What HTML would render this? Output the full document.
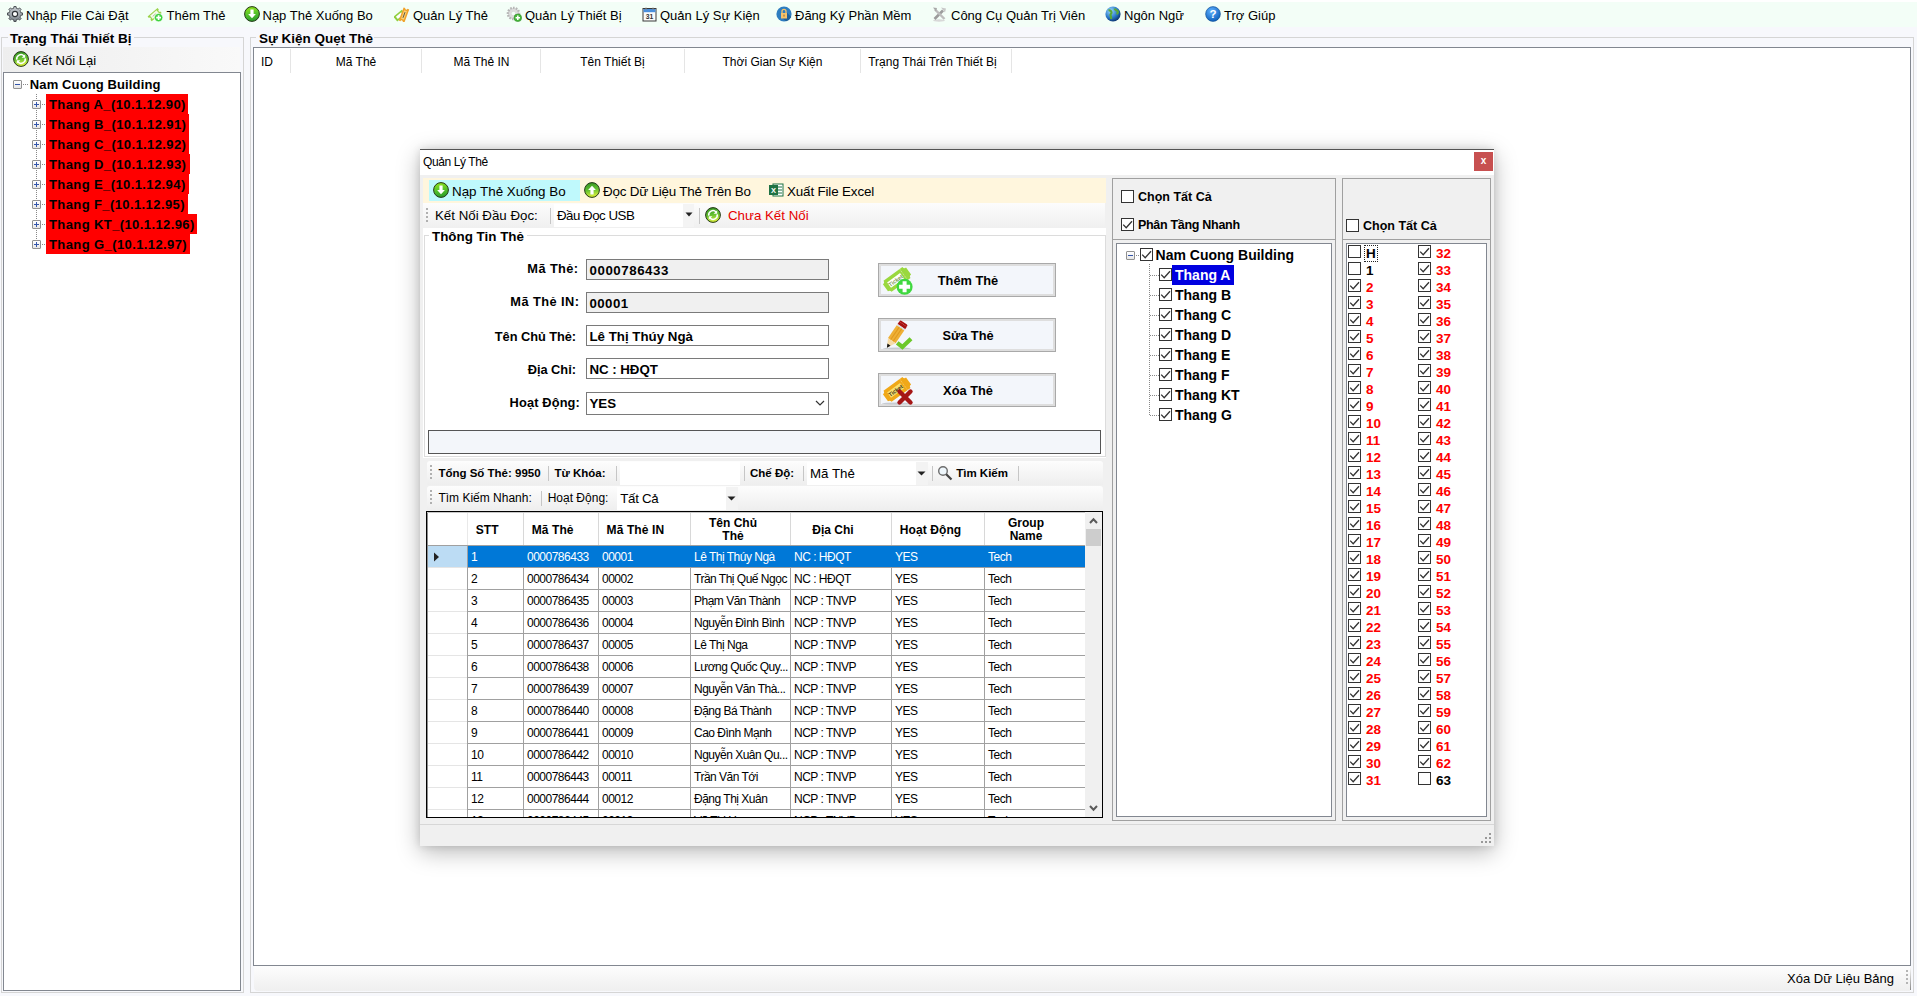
<!DOCTYPE html><html><head><meta charset="utf-8"><style>
html,body{margin:0;padding:0;width:1917px;height:996px;overflow:hidden;background:#f7f8fc;font-family:"Liberation Sans",sans-serif;}
.t{position:absolute;white-space:nowrap;line-height:1;}
.r{position:absolute;box-sizing:border-box;}
</style></head><body>
<div class="r" style="left:0px;top:0px;width:1917px;height:2px;background:#fff"></div>
<div class="r" style="left:0px;top:2px;width:1917px;height:25px;background:#f3fef7"></div>
<svg class="r" style="left:7px;top:6px" width="16" height="16" viewBox="0 0 16 16"><defs><linearGradient id="gr" x1="0" y1="0" x2="0" y2="1"><stop offset="0" stop-color="#c9ced3"/><stop offset="1" stop-color="#7d858c"/></linearGradient></defs><path d="M13.76 6.71 L15.53 6.94 L15.53 9.06 L13.76 9.29 L13.45 10.26 L12.98 11.16 L14.07 12.57 L12.57 14.07 L11.16 12.98 L10.26 13.45 L9.29 13.76 L9.06 15.53 L6.94 15.53 L6.71 13.76 L5.74 13.45 L4.84 12.98 L3.43 14.07 L1.93 12.57 L3.02 11.16 L2.55 10.26 L2.24 9.29 L0.47 9.06 L0.47 6.94 L2.24 6.71 L2.55 5.74 L3.02 4.84 L1.93 3.43 L3.43 1.93 L4.84 3.02 L5.74 2.55 L6.71 2.24 L6.94 0.47 L9.06 0.47 L9.29 2.24 L10.26 2.55 L11.16 3.02 L12.57 1.93 L14.07 3.43 L12.98 4.84 L13.45 5.74Z" fill="url(#gr)" stroke="#3e4348" stroke-width="0.9"/><circle cx="8" cy="8" r="2.6" fill="#fff" stroke="#2e3236" stroke-width="1.1"/></svg>
<div class="t" style="left:26px;top:8.8px;font-size:13px;font-weight:400;color:#000;">Nhập File Cài Đặt</div>
<svg class="r" style="left:147px;top:6px" width="16" height="16" viewBox="0 0 16 16"><g transform="rotate(-40 7.5 8.5)"><path d="M1 5.5h13v2a1.2 1.2 0 0 0 0 2.4v2H1v-2a1.2 1.2 0 0 0 0-2.4z" fill="#9ad24a"/><rect x="3.3" y="6.6" width="8.4" height="4.2" fill="#f4fae8"/><path d="M5 8.8h4" stroke="#9aa08a" stroke-width="0.7"/></g><circle cx="11.6" cy="11.6" r="4.2" fill="#3ed33e" stroke="#fff" stroke-width="0.6"/><path d="M11.6 9.2v4.8M9.2 11.6h4.8" stroke="#fff" stroke-width="1.7"/></svg>
<div class="t" style="left:166.5px;top:8.8px;font-size:13px;font-weight:400;color:#000;">Thêm Thẻ</div>
<svg class="r" style="left:244px;top:6px" width="16" height="16" viewBox="0 0 16 16"><defs><linearGradient id="g244_6" x1="0" y1="0" x2="0.2" y2="1"><stop offset="0" stop-color="#9ce81c"/><stop offset="0.5" stop-color="#5cc828"/><stop offset="1" stop-color="#2ea02a"/></linearGradient></defs><circle cx="8" cy="8" r="7.4" fill="url(#g244_6)" stroke="#243818" stroke-width="1"/><path d="M6.4 3.6h3.2v4.3h2.3L8 12.3 4.1 7.9h2.3z" fill="#fff"/></svg>
<div class="t" style="left:262.5px;top:8.8px;font-size:13px;font-weight:400;color:#000;">Nạp Thẻ Xuống Bo</div>
<svg class="r" style="left:394px;top:6px" width="16" height="16" viewBox="0 0 16 16"><g transform="rotate(-40 7 9)"><rect x="0" y="5.5" width="11" height="6" fill="#8fd03e"/><rect x="2" y="7" width="7" height="3" fill="#fff"/></g><g transform="rotate(-70 10 9)"><path d="M3 6h14v1.8a1.2 1.2 0 0 0 0 2.4V12H3v-1.8a1.2 1.2 0 0 0 0-2.4z" fill="#f0a22a"/><rect x="5.5" y="7.5" width="9" height="3" fill="#f8d27a"/><path d="M7 9h6" stroke="#333" stroke-width="0.7"/></g></svg>
<div class="t" style="left:413px;top:8.8px;font-size:13px;font-weight:400;color:#000;">Quản Lý Thẻ</div>
<svg class="r" style="left:506px;top:6px" width="16" height="16" viewBox="0 0 16 16"><circle cx="7.5" cy="7.5" r="5.6" fill="#d2d2d2" stroke="#b5b5b5" stroke-width="2.4" stroke-dasharray="1.6 1.2"/><circle cx="7.5" cy="7.5" r="4.4" fill="#dcdcdc"/><circle cx="7.5" cy="7.5" r="1.8" fill="#f3fef7"/><circle cx="11.8" cy="11.8" r="3.8" fill="#46b83a" stroke="#2d8a25" stroke-width="0.6"/><path d="M11.8 9.6v4.4M9.6 11.8h4.4" stroke="#fff" stroke-width="1.5"/></svg>
<div class="t" style="left:525px;top:8.8px;font-size:13px;font-weight:400;color:#000;">Quản Lý Thiết Bị</div>
<svg class="r" style="left:642px;top:6px" width="16" height="16" viewBox="0 0 16 16"><rect x="1" y="2.5" width="13" height="12.5" fill="#fbfbfb" stroke="#3a3a3a" stroke-width="1"/><rect x="1.5" y="3" width="12" height="3.2" fill="#4a8fdc"/><path d="M4 1.5v2.5M11 1.5v2.5" stroke="#888" stroke-width="1"/><text x="7.5" y="12.8" font-size="6.8" text-anchor="middle" font-family="Liberation Sans" font-weight="bold" fill="#333">31</text></svg>
<div class="t" style="left:660px;top:8.8px;font-size:13px;font-weight:400;color:#000;">Quản Lý Sự Kiện</div>
<svg class="r" style="left:776px;top:6px" width="16" height="16" viewBox="0 0 16 16"><circle cx="8" cy="8" r="7.6" fill="#2e7dc0"/><path d="M10.8 6.5L15.2 11A7.6 7.6 0 0 1 10 15.3L5 11z" fill="#1f5f98"/><rect x="5" y="7" width="6" height="5.5" fill="#f6c26a"/><path d="M6 7V5.3a2 2 0 0 1 4 0V7" stroke="#f6c26a" stroke-width="1.3" fill="none"/><rect x="7.5" y="8.6" width="1" height="2" fill="#8a6a3a"/></svg>
<div class="t" style="left:795px;top:8.8px;font-size:13px;font-weight:400;color:#000;">Đăng Ký Phần Mềm</div>
<svg class="r" style="left:932px;top:6px" width="16" height="16" viewBox="0 0 16 16"><ellipse cx="7" cy="14.5" rx="6" ry="1.2" fill="#d8d8d8"/><path d="M2.5 13L11 4.5" stroke="#9c9c9c" stroke-width="2.6"/><path d="M3 3.5l9.5 9.5" stroke="#bdbdbd" stroke-width="2.4"/><path d="M9 1.5l5 1-1 4z" fill="#c8c8c8"/><path d="M1 1.5l4 0.5-1 3.5z" fill="#a8a8a8"/></svg>
<div class="t" style="left:951px;top:8.8px;font-size:13px;font-weight:400;color:#000;">Công Cụ Quản Trị Viên</div>
<svg class="r" style="left:1105px;top:6px" width="16" height="16" viewBox="0 0 16 16"><defs><radialGradient id="gl" cx="35%" cy="30%" r="75%"><stop offset="0" stop-color="#9ad8ff"/><stop offset="0.6" stop-color="#2a78c8"/><stop offset="1" stop-color="#0a2f6a"/></radialGradient></defs><circle cx="8" cy="8" r="7.6" fill="url(#gl)"/><path d="M3.5 4.5c1.5-0.5 3 0.5 3 2s-1.5 1.5-1 3 1 2 0.5 3.5M9.5 2.5c0.5 1.5 2 1.5 3 2.5s0 2.5-1 3" stroke="#5aa83a" stroke-width="2.2" fill="none"/></svg>
<div class="t" style="left:1124px;top:8.8px;font-size:13px;font-weight:400;color:#000;">Ngôn Ngữ</div>
<svg class="r" style="left:1205px;top:6px" width="16" height="16" viewBox="0 0 16 16"><defs><radialGradient id="hl" cx="40%" cy="30%" r="75%"><stop offset="0" stop-color="#5fb0ff"/><stop offset="1" stop-color="#0b5cb8"/></radialGradient></defs><circle cx="8" cy="8" r="7.4" fill="url(#hl)" stroke="#0a4a90" stroke-width="0.6"/><text x="8" y="12.3" font-size="11.5" font-weight="bold" text-anchor="middle" font-family="Liberation Sans" fill="#fff">?</text></svg>
<div class="t" style="left:1224px;top:8.8px;font-size:13px;font-weight:400;color:#000;">Trợ Giúp</div>
<div class="r" style="left:1px;top:37px;width:243px;height:956px;border:1px solid #d5d5d5;"></div>
<div class="r" style="left:8px;top:30px;width:126px;height:14px;background:#f7f8fc"></div>
<div class="t" style="left:10px;top:32.0px;font-size:13.5px;font-weight:700;color:#000;">Trạng Thái Thiết Bị</div>
<div class="r" style="left:3px;top:47px;width:237px;height:25px;background:linear-gradient(to right,#eeeeee,#f9f9f9)"></div>
<svg class="r" style="left:13px;top:51px" width="16" height="16" viewBox="0 0 16 16"><defs><linearGradient id="g13_51" x1="0" y1="0" x2="0.2" y2="1"><stop offset="0" stop-color="#2f8f22"/><stop offset="0.55" stop-color="#62c030"/><stop offset="1" stop-color="#d6ee3a"/></linearGradient></defs><circle cx="8" cy="8" r="7.4" fill="url(#g13_51)" stroke="#243818" stroke-width="1"/><path d="M3.8 8.6A4.2 4.2 0 0 1 11 5" stroke="#fff" stroke-width="1.5" fill="none"/><path d="M12.2 3.2v3.6H8.6z" fill="#fff"/><path d="M12.2 7.4A4.2 4.2 0 0 1 5 11" stroke="#fff" stroke-width="1.5" fill="none"/><path d="M3.8 12.8V9.2h3.6z" fill="#fff"/></svg>
<div class="t" style="left:32.5px;top:53.8px;font-size:13px;font-weight:400;color:#000;">Kết Nối Lại</div>
<div class="r" style="left:3px;top:72px;width:238px;height:919px;border:1px solid #828790;background:#fff"></div>
<div class="r" style="left:13px;top:80px;width:9px;height:9px;border:1px solid #919191;background:linear-gradient(#fff,#e6e6e6);border-radius:1px"></div>
<div class="r" style="left:15px;top:84px;width:5px;height:1px;background:#3355aa"></div>
<div class="r" style="left:23px;top:84px;width:5px;height:1px;background-image:linear-gradient(to right,#888 50%,transparent 50%);background-size:2px 1px"></div>
<div class="t" style="left:29.8px;top:77.8px;font-size:13px;font-weight:700;color:#000;letter-spacing:0.12px">Nam Cuong Building</div>
<div class="r" style="left:36px;top:94px;width:1px;height:150px;background-image:linear-gradient(#888 50%,transparent 50%);background-size:1px 2px"></div>
<div class="r" style="left:46px;top:94px;width:142px;height:20px;background:#ff0000"></div>
<div class="r" style="left:32px;top:100px;width:9px;height:9px;border:1px solid #919191;background:linear-gradient(#fff,#e6e6e6);border-radius:1px"></div>
<div class="r" style="left:34px;top:104px;width:5px;height:1px;background:#3355aa"></div>
<div class="r" style="left:36px;top:102px;width:1px;height:5px;background:#3355aa"></div>
<div class="r" style="left:42px;top:104px;width:4px;height:1px;background-image:linear-gradient(to right,#888 50%,transparent 50%);background-size:2px 1px"></div>
<div class="t" style="left:49px;top:98.0px;font-size:13px;font-weight:700;color:#000;letter-spacing:0.4px">Thang A_(10.1.12.90)</div>
<div class="r" style="left:46px;top:114px;width:143px;height:20px;background:#ff0000"></div>
<div class="r" style="left:32px;top:120px;width:9px;height:9px;border:1px solid #919191;background:linear-gradient(#fff,#e6e6e6);border-radius:1px"></div>
<div class="r" style="left:34px;top:124px;width:5px;height:1px;background:#3355aa"></div>
<div class="r" style="left:36px;top:122px;width:1px;height:5px;background:#3355aa"></div>
<div class="r" style="left:42px;top:124px;width:4px;height:1px;background-image:linear-gradient(to right,#888 50%,transparent 50%);background-size:2px 1px"></div>
<div class="t" style="left:49px;top:118.0px;font-size:13px;font-weight:700;color:#000;letter-spacing:0.4px">Thang B_(10.1.12.91)</div>
<div class="r" style="left:46px;top:134px;width:143px;height:20px;background:#ff0000"></div>
<div class="r" style="left:32px;top:140px;width:9px;height:9px;border:1px solid #919191;background:linear-gradient(#fff,#e6e6e6);border-radius:1px"></div>
<div class="r" style="left:34px;top:144px;width:5px;height:1px;background:#3355aa"></div>
<div class="r" style="left:36px;top:142px;width:1px;height:5px;background:#3355aa"></div>
<div class="r" style="left:42px;top:144px;width:4px;height:1px;background-image:linear-gradient(to right,#888 50%,transparent 50%);background-size:2px 1px"></div>
<div class="t" style="left:49px;top:138.0px;font-size:13px;font-weight:700;color:#000;letter-spacing:0.4px">Thang C_(10.1.12.92)</div>
<div class="r" style="left:46px;top:154px;width:144px;height:20px;background:#ff0000"></div>
<div class="r" style="left:32px;top:160px;width:9px;height:9px;border:1px solid #919191;background:linear-gradient(#fff,#e6e6e6);border-radius:1px"></div>
<div class="r" style="left:34px;top:164px;width:5px;height:1px;background:#3355aa"></div>
<div class="r" style="left:36px;top:162px;width:1px;height:5px;background:#3355aa"></div>
<div class="r" style="left:42px;top:164px;width:4px;height:1px;background-image:linear-gradient(to right,#888 50%,transparent 50%);background-size:2px 1px"></div>
<div class="t" style="left:49px;top:158.0px;font-size:13px;font-weight:700;color:#000;letter-spacing:0.4px">Thang D_(10.1.12.93)</div>
<div class="r" style="left:46px;top:174px;width:143px;height:20px;background:#ff0000"></div>
<div class="r" style="left:32px;top:180px;width:9px;height:9px;border:1px solid #919191;background:linear-gradient(#fff,#e6e6e6);border-radius:1px"></div>
<div class="r" style="left:34px;top:184px;width:5px;height:1px;background:#3355aa"></div>
<div class="r" style="left:36px;top:182px;width:1px;height:5px;background:#3355aa"></div>
<div class="r" style="left:42px;top:184px;width:4px;height:1px;background-image:linear-gradient(to right,#888 50%,transparent 50%);background-size:2px 1px"></div>
<div class="t" style="left:49px;top:178.0px;font-size:13px;font-weight:700;color:#000;letter-spacing:0.4px">Thang E_(10.1.12.94)</div>
<div class="r" style="left:46px;top:194px;width:142px;height:20px;background:#ff0000"></div>
<div class="r" style="left:32px;top:200px;width:9px;height:9px;border:1px solid #919191;background:linear-gradient(#fff,#e6e6e6);border-radius:1px"></div>
<div class="r" style="left:34px;top:204px;width:5px;height:1px;background:#3355aa"></div>
<div class="r" style="left:36px;top:202px;width:1px;height:5px;background:#3355aa"></div>
<div class="r" style="left:42px;top:204px;width:4px;height:1px;background-image:linear-gradient(to right,#888 50%,transparent 50%);background-size:2px 1px"></div>
<div class="t" style="left:49px;top:198.0px;font-size:13px;font-weight:700;color:#000;letter-spacing:0.4px">Thang F_(10.1.12.95)</div>
<div class="r" style="left:46px;top:214px;width:151px;height:20px;background:#ff0000"></div>
<div class="r" style="left:32px;top:220px;width:9px;height:9px;border:1px solid #919191;background:linear-gradient(#fff,#e6e6e6);border-radius:1px"></div>
<div class="r" style="left:34px;top:224px;width:5px;height:1px;background:#3355aa"></div>
<div class="r" style="left:36px;top:222px;width:1px;height:5px;background:#3355aa"></div>
<div class="r" style="left:42px;top:224px;width:4px;height:1px;background-image:linear-gradient(to right,#888 50%,transparent 50%);background-size:2px 1px"></div>
<div class="t" style="left:49px;top:218.0px;font-size:13px;font-weight:700;color:#000;letter-spacing:0.4px">Thang KT_(10.1.12.96)</div>
<div class="r" style="left:46px;top:234px;width:144px;height:20px;background:#ff0000"></div>
<div class="r" style="left:32px;top:240px;width:9px;height:9px;border:1px solid #919191;background:linear-gradient(#fff,#e6e6e6);border-radius:1px"></div>
<div class="r" style="left:34px;top:244px;width:5px;height:1px;background:#3355aa"></div>
<div class="r" style="left:36px;top:242px;width:1px;height:5px;background:#3355aa"></div>
<div class="r" style="left:42px;top:244px;width:4px;height:1px;background-image:linear-gradient(to right,#888 50%,transparent 50%);background-size:2px 1px"></div>
<div class="t" style="left:49px;top:238.0px;font-size:13px;font-weight:700;color:#000;letter-spacing:0.4px">Thang G_(10.1.12.97)</div>
<div class="r" style="left:250px;top:37px;width:1664px;height:956px;border:1px solid #d5d5d5;"></div>
<div class="r" style="left:256px;top:30px;width:118px;height:14px;background:#f7f8fc"></div>
<div class="t" style="left:259px;top:32.0px;font-size:13.5px;font-weight:700;color:#000;">Sự Kiện Quẹt Thẻ</div>
<div class="r" style="left:253px;top:47px;width:1658px;height:919px;border:1px solid #828790;background:#fff"></div>
<div class="t" style="left:261px;top:55.7px;font-size:12px;font-weight:400;color:#000;">ID</div>
<div class="r" style="left:290px;top:49px;width:1px;height:24px;background:#e5e5e5"></div>
<div class="t" style="left:206.0px;width:300px;text-align:center;top:55.7px;font-size:12px;font-weight:400;color:#000;">Mã Thẻ</div>
<div class="r" style="left:421px;top:49px;width:1px;height:24px;background:#e5e5e5"></div>
<div class="t" style="left:331.5px;width:300px;text-align:center;top:55.7px;font-size:12px;font-weight:400;color:#000;">Mã Thẻ IN</div>
<div class="r" style="left:540px;top:49px;width:1px;height:24px;background:#e5e5e5"></div>
<div class="t" style="left:462.5px;width:300px;text-align:center;top:55.7px;font-size:12px;font-weight:400;color:#000;">Tên Thiết Bị</div>
<div class="r" style="left:684px;top:49px;width:1px;height:24px;background:#e5e5e5"></div>
<div class="t" style="left:622.5px;width:300px;text-align:center;top:55.7px;font-size:12px;font-weight:400;color:#000;">Thời Gian Sự Kiện</div>
<div class="r" style="left:860px;top:49px;width:1px;height:24px;background:#e5e5e5"></div>
<div class="t" style="left:782.5px;width:300px;text-align:center;top:55.7px;font-size:12px;font-weight:400;color:#000;">Trạng Thái Trên Thiết Bị</div>
<div class="r" style="left:1011px;top:49px;width:1px;height:24px;background:#e5e5e5"></div>
<div class="r" style="left:254px;top:966px;width:1656px;height:25px;background:linear-gradient(#fdfdfd,#efefef);border-bottom-left-radius:4px"></div>
<div class="t" style="left:1787px;top:971.8px;font-size:13px;font-weight:400;color:#000;">Xóa Dữ Liệu Bảng</div>
<div class="r" style="left:1910px;top:968px;width:1px;height:22px;background:linear-gradient(#f5f5f5,#8a8a8a)"></div>
<div class="r" style="left:1906px;top:970px;width:2px;height:2px;background:#b5b5b5"></div>
<div class="r" style="left:1906px;top:974px;width:2px;height:2px;background:#b5b5b5"></div>
<div class="r" style="left:1906px;top:978px;width:2px;height:2px;background:#b5b5b5"></div>
<div class="r" style="left:1906px;top:982px;width:2px;height:2px;background:#b5b5b5"></div>
<div class="r" style="left:420px;top:149px;width:1074px;height:697px;background:#f0f0f0;box-shadow:0 6px 22px rgba(0,0,0,0.28), 0 0 8px rgba(0,0,0,0.12);border-top:1px solid #555"></div>
<div class="r" style="left:420px;top:150px;width:1074px;height:25px;background:#fff"></div>
<div class="t" style="left:423px;top:155.9px;font-size:12px;font-weight:400;color:#000;letter-spacing:-0.4px">Quản Lý Thẻ</div>
<div class="r" style="left:1474px;top:152px;width:19px;height:19px;background:#c75050"></div>
<div class="t" style="left:1474.0px;width:19px;text-align:center;top:155.9px;font-size:10px;font-weight:700;color:#fff;">x</div>
<div class="r" style="left:423px;top:178px;width:683px;height:25px;background:#fff6dd"></div>
<div class="r" style="left:429px;top:180px;width:151px;height:21px;background:#bff9fc"></div>
<svg class="r" style="left:433px;top:182px" width="16" height="16" viewBox="0 0 16 16"><defs><linearGradient id="g433_182" x1="0" y1="0" x2="0.2" y2="1"><stop offset="0" stop-color="#9ce81c"/><stop offset="0.5" stop-color="#5cc828"/><stop offset="1" stop-color="#2ea02a"/></linearGradient></defs><circle cx="8" cy="8" r="7.4" fill="url(#g433_182)" stroke="#243818" stroke-width="1"/><path d="M6.4 3.6h3.2v4.3h2.3L8 12.3 4.1 7.9h2.3z" fill="#fff"/></svg>
<div class="t" style="left:452px;top:184.5px;font-size:13.4px;font-weight:400;color:#000;">Nạp Thẻ Xuống Bo</div>
<svg class="r" style="left:584px;top:182px" width="16" height="16" viewBox="0 0 16 16"><defs><linearGradient id="g584_182" x1="0" y1="0" x2="0.2" y2="1"><stop offset="0" stop-color="#2f8f22"/><stop offset="0.55" stop-color="#62c030"/><stop offset="1" stop-color="#d6ee3a"/></linearGradient></defs><circle cx="8" cy="8" r="7.4" fill="url(#g584_182)" stroke="#243818" stroke-width="1"/><path d="M6.4 12.4h3.2V8.1h2.3L8 3.7 4.1 8.1h2.3z" fill="#fff"/></svg>
<div class="t" style="left:603px;top:184.5px;font-size:13.4px;font-weight:400;color:#000;letter-spacing:-0.2px">Đọc Dữ Liệu Thẻ Trên Bo</div>
<svg class="r" style="left:768px;top:182px" width="16" height="16" viewBox="0 0 16 16"><rect x="5" y="2" width="10" height="12" fill="#fff" stroke="#1f7244"/><path d="M8 5h6M8 8h6M8 11h6" stroke="#1f7244"/><rect x="1" y="3" width="9" height="10" fill="#1f7244"/><text x="5.5" y="11" font-size="7.5" font-weight="bold" text-anchor="middle" font-family="Liberation Sans" fill="#fff">X</text></svg>
<div class="t" style="left:787px;top:184.5px;font-size:13.4px;font-weight:400;color:#000;letter-spacing:-0.15px">Xuất File Excel</div>
<div class="r" style="left:423px;top:203px;width:682px;height:25px;background:linear-gradient(#fcfcfc,#f0f0f0)"></div>
<div class="r" style="left:426px;top:208px;width:2px;height:2px;background:#b0b0b0"></div>
<div class="r" style="left:426px;top:212px;width:2px;height:2px;background:#b0b0b0"></div>
<div class="r" style="left:426px;top:216px;width:2px;height:2px;background:#b0b0b0"></div>
<div class="r" style="left:426px;top:220px;width:2px;height:2px;background:#b0b0b0"></div>
<div class="t" style="left:435px;top:208.6px;font-size:13.3px;font-weight:400;color:#000;">Kết Nối Đầu Đọc:</div>
<div class="r" style="left:550px;top:208px;width:1px;height:16px;background:#c6c6c6"></div>
<div class="r" style="left:554px;top:204px;width:140px;height:23px;background:#fff"></div>
<div class="r" style="left:683px;top:204px;width:11px;height:23px;background:#f4f4f4"></div>
<svg class="r" style="left:685px;top:212px" width="8" height="5" viewBox="0 0 8 5"><path d="M0.5 0.5h7l-3.5 4z" fill="#222"/></svg>
<div class="t" style="left:557px;top:208.6px;font-size:13.3px;font-weight:400;color:#000;letter-spacing:-0.5px">Đầu Đọc USB</div>
<div class="r" style="left:699px;top:208px;width:1px;height:16px;background:#c6c6c6"></div>
<svg class="r" style="left:705px;top:207px" width="16" height="16" viewBox="0 0 16 16"><defs><linearGradient id="g705_207" x1="0" y1="0" x2="0.2" y2="1"><stop offset="0" stop-color="#2f8f22"/><stop offset="0.55" stop-color="#62c030"/><stop offset="1" stop-color="#d6ee3a"/></linearGradient></defs><circle cx="8" cy="8" r="7.4" fill="url(#g705_207)" stroke="#243818" stroke-width="1"/><path d="M3.8 8.6A4.2 4.2 0 0 1 11 5" stroke="#fff" stroke-width="1.5" fill="none"/><path d="M12.2 3.2v3.6H8.6z" fill="#fff"/><path d="M12.2 7.4A4.2 4.2 0 0 1 5 11" stroke="#fff" stroke-width="1.5" fill="none"/><path d="M3.8 12.8V9.2h3.6z" fill="#fff"/></svg>
<div class="t" style="left:728px;top:208.6px;font-size:13.3px;font-weight:400;color:#e60000;">Chưa Kết Nối</div>
<div class="r" style="left:423px;top:228px;width:683px;height:230px;background:#fff"></div>
<div class="r" style="left:424px;top:235px;width:682px;height:222px;border:1px solid #dcdcdc"></div>
<div class="r" style="left:429px;top:229px;width:98px;height:14px;background:#fff"></div>
<div class="t" style="left:432px;top:229.5px;font-size:13.4px;font-weight:700;color:#000;">Thông Tin Thẻ</div>
<div class="t" style="left:278.5px;width:300px;text-align:right;top:263.1px;font-size:12.8px;font-weight:700;color:#000;letter-spacing:0.4px">Mã Thẻ:</div>
<div class="t" style="left:279.5px;width:300px;text-align:right;top:296.4px;font-size:12.8px;font-weight:700;color:#000;letter-spacing:0.45px">Mã Thẻ IN:</div>
<div class="t" style="left:276px;width:300px;text-align:right;top:330.8px;font-size:12.8px;font-weight:700;color:#000;letter-spacing:-0.05px">Tên Chủ Thẻ:</div>
<div class="t" style="left:276px;width:300px;text-align:right;top:363.6px;font-size:12.8px;font-weight:700;color:#000;letter-spacing:0px">Địa Chỉ:</div>
<div class="t" style="left:280px;width:300px;text-align:right;top:397.3px;font-size:12.8px;font-weight:700;color:#000;letter-spacing:0.15px">Hoạt Động:</div>
<div class="r" style="left:586px;top:259px;width:243px;height:21px;border:1px solid #7a7a7a;background:#f0f0f0"></div>
<div class="t" style="left:589.5px;top:263.5px;font-size:13.3px;font-weight:700;color:#000;letter-spacing:0.55px">0000786433</div>
<div class="r" style="left:586px;top:292px;width:243px;height:21px;border:1px solid #7a7a7a;background:#f0f0f0"></div>
<div class="t" style="left:589.5px;top:296.8px;font-size:13.3px;font-weight:700;color:#000;letter-spacing:0.4px">00001</div>
<div class="r" style="left:586px;top:325px;width:243px;height:21px;border:1px solid #7a7a7a;background:#fff"></div>
<div class="t" style="left:589.5px;top:330.1px;font-size:13.3px;font-weight:700;color:#000;letter-spacing:0.0px">Lê Thị Thúy Ngà</div>
<div class="r" style="left:586px;top:358px;width:243px;height:21px;border:1px solid #7a7a7a;background:#fff"></div>
<div class="t" style="left:589.5px;top:363.1px;font-size:13.3px;font-weight:700;color:#000;letter-spacing:-0.05px">NC : HĐQT</div>
<div class="r" style="left:586px;top:392px;width:243px;height:23px;border:1px solid #7a7a7a;background:#fff"></div>
<div class="t" style="left:589.5px;top:397.3px;font-size:13.3px;font-weight:700;color:#000;">YES</div>
<svg class="r" style="left:815px;top:400px" width="10" height="7" viewBox="0 0 10 7"><path d="M1 1l4 4 4-4" stroke="#333" stroke-width="1.2" fill="none"/></svg>
<div class="r" style="left:878px;top:263px;width:178px;height:34px;border:1px solid #a9a9a9;background:#f3f6fb;box-shadow:inset 0 0 0 2px #dedede"></div>
<div class="t" style="left:818.0px;width:300px;text-align:center;top:274.8px;font-size:12.8px;font-weight:700;color:#000;">Thêm Thẻ</div>
<div class="r" style="left:878px;top:318px;width:178px;height:34px;border:1px solid #a9a9a9;background:#f3f6fb;box-shadow:inset 0 0 0 2px #dedede"></div>
<div class="t" style="left:818.0px;width:300px;text-align:center;top:329.8px;font-size:12.8px;font-weight:700;color:#000;">Sửa Thẻ</div>
<div class="r" style="left:878px;top:373px;width:178px;height:34px;border:1px solid #a9a9a9;background:#f3f6fb;box-shadow:inset 0 0 0 2px #dedede"></div>
<div class="t" style="left:818.0px;width:300px;text-align:center;top:384.8px;font-size:12.8px;font-weight:700;color:#000;">Xóa Thẻ</div>
<svg class="r" style="left:876px;top:262px" width="44" height="38" viewBox="0 0 44 38"><g transform="translate(21 17.4) rotate(-36)"><path d="M-11.700000000000001 -6.9H11.700000000000001A2.6 2.6 0 0 0 14.3 -4.300000000000001V4.300000000000001A2.6 2.6 0 0 0 11.700000000000001 6.9H-11.700000000000001A2.6 2.6 0 0 0 -14.3 4.300000000000001V-4.300000000000001A2.6 2.6 0 0 0 -11.700000000000001 -6.9Z" fill="#9ad83e"/><rect x="-9.8" y="-3.3" width="16" height="6.6" fill="#ffffff"/><path d="M8.2 -6.5V6.5" stroke="#d8f0b0" stroke-width="0.7" stroke-dasharray="1.2 0.8"/><text x="-1.8" y="2.2" font-size="5.6" font-weight="bold" text-anchor="middle" font-family="Liberation Sans" fill="#7b9a52">Ticket</text></g><circle cx="28.6" cy="24.8" r="8" fill="#3fd83f"/><path d="M28.6 19.3v11M23.1 24.8h11" stroke="#fff" stroke-width="4"/></svg>
<svg class="r" style="left:876px;top:317px" width="44" height="38" viewBox="0 0 44 38"><ellipse cx="21" cy="31.4" rx="14" ry="0.9" fill="#c8ccd2"/><g transform="translate(19.2 18.6) rotate(34.5)"><path d="M-4.6 -13.8h9.2v-0.2a1.6 1.6 0 0 0 -1.6 -1.8h-6a1.6 1.6 0 0 0 -1.6 1.8z" fill="#a81010"/><rect x="-4.6" y="-13.9" width="9.2" height="3" fill="#a81010"/><rect x="-4.6" y="-10.9" width="9.2" height="1.6" fill="#d8dde2"/><rect x="-4.6" y="-9.3" width="9.2" height="15.3" fill="#efb036"/><path d="M-1.5 -9.3v15.3M1.5 -9.3v15.3" stroke="#e09a20" stroke-width="1.1"/><path d="M-4.6 6h9.2L0 14.6z" fill="#f6dca8"/><path d="M-1.9 11l1.9 3.6 1.9-3.6z" fill="#111"/></g><path d="M21.2 25.8l5.2 4.2 8.6-8.2" stroke="#6cc82a" stroke-width="4.2" fill="none" stroke-linejoin="miter"/></svg>
<svg class="r" style="left:876px;top:372px" width="44" height="38" viewBox="0 0 44 38"><ellipse cx="20" cy="31.5" rx="14" ry="0.9" fill="#c8ccd2"/><g transform="translate(21 17.4) rotate(-36)"><path d="M-11.700000000000001 -6.9H11.700000000000001A2.6 2.6 0 0 0 14.3 -4.300000000000001V4.300000000000001A2.6 2.6 0 0 0 11.700000000000001 6.9H-11.700000000000001A2.6 2.6 0 0 0 -14.3 4.300000000000001V-4.300000000000001A2.6 2.6 0 0 0 -11.700000000000001 -6.9Z" fill="#f0a818"/><rect x="-9.8" y="-3.3" width="16" height="6.6" fill="#f8e070"/><path d="M8.2 -6.5V6.5" stroke="#fbd070" stroke-width="0.7" stroke-dasharray="1.2 0.8"/><text x="-1.8" y="2.2" font-size="5.6" font-weight="bold" text-anchor="middle" font-family="Liberation Sans" fill="#3a3010">Ticket</text></g><path d="M23.5 19.5l11 11M34.5 19.5l-11 11" stroke="#a51616" stroke-width="4.4" stroke-linecap="round"/></svg>
<div class="r" style="left:428px;top:430px;width:673px;height:24px;border:1px solid #555;background:#f3f6fa"></div>
<div class="r" style="left:427px;top:461px;width:676px;height:24px;background:linear-gradient(#fdfdfd,#eeeeee);border-top-left-radius:3px;border-top-right-radius:3px"></div>
<div class="r" style="left:430px;top:465px;width:2px;height:2px;background:#b0b0b0"></div>
<div class="r" style="left:430px;top:469px;width:2px;height:2px;background:#b0b0b0"></div>
<div class="r" style="left:430px;top:473px;width:2px;height:2px;background:#b0b0b0"></div>
<div class="r" style="left:430px;top:477px;width:2px;height:2px;background:#b0b0b0"></div>
<div class="t" style="left:438.4px;top:467.7px;font-size:11.5px;font-weight:700;color:#000;">Tổng Số Thẻ: 9950</div>
<div class="r" style="left:548px;top:466px;width:1px;height:15px;background:#c6c6c6"></div>
<div class="t" style="left:554.4px;top:467.7px;font-size:11.5px;font-weight:700;color:#000;">Từ Khóa:</div>
<div class="r" style="left:616px;top:466px;width:1px;height:15px;background:#c6c6c6"></div>
<div class="r" style="left:620px;top:462px;width:120px;height:23px;background:#fff"></div>
<div class="r" style="left:744px;top:466px;width:1px;height:15px;background:#c6c6c6"></div>
<div class="t" style="left:750px;top:467.7px;font-size:11.5px;font-weight:700;color:#000;">Chế Độ:</div>
<div class="r" style="left:803px;top:466px;width:1px;height:15px;background:#c6c6c6"></div>
<div class="r" style="left:807px;top:462px;width:121px;height:23px;background:#fff"></div>
<div class="r" style="left:916px;top:462px;width:12px;height:23px;background:#f3f3f3"></div>
<svg class="r" style="left:917px;top:471px" width="9" height="5" viewBox="0 0 9 5"><path d="M0.5 0.5h8l-4 4z" fill="#222"/></svg>
<div class="t" style="left:810px;top:466.6px;font-size:13.3px;font-weight:400;color:#000;">Mã Thẻ</div>
<div class="r" style="left:932px;top:466px;width:1px;height:15px;background:#c6c6c6"></div>
<svg class="r" style="left:937px;top:465px" width="16" height="16" viewBox="0 0 16 16"><circle cx="6" cy="6" r="4.3" fill="#eef6fb" stroke="#6d6d6d" stroke-width="1.4"/><path d="M9.2 9.2l5.3 5.3" stroke="#444" stroke-width="2.2"/></svg>
<div class="t" style="left:956.2px;top:467.7px;font-size:11.5px;font-weight:700;color:#000;">Tìm Kiếm</div>
<div class="r" style="left:1018px;top:466px;width:1px;height:15px;background:#c6c6c6"></div>
<div class="r" style="left:427px;top:486px;width:676px;height:24px;background:linear-gradient(#fdfdfd,#eeeeee);border-top-left-radius:3px;border-top-right-radius:3px"></div>
<div class="r" style="left:430px;top:490px;width:2px;height:2px;background:#b0b0b0"></div>
<div class="r" style="left:430px;top:494px;width:2px;height:2px;background:#b0b0b0"></div>
<div class="r" style="left:430px;top:498px;width:2px;height:2px;background:#b0b0b0"></div>
<div class="r" style="left:430px;top:502px;width:2px;height:2px;background:#b0b0b0"></div>
<div class="t" style="left:438.4px;top:492.0px;font-size:12px;font-weight:400;color:#000;">Tìm Kiếm Nhanh:</div>
<div class="r" style="left:541px;top:491px;width:1px;height:15px;background:#c6c6c6"></div>
<div class="t" style="left:547.7px;top:492.0px;font-size:12px;font-weight:400;color:#000;">Hoạt Động:</div>
<div class="r" style="left:617px;top:487px;width:121px;height:23px;background:#fff"></div>
<div class="r" style="left:726px;top:487px;width:12px;height:23px;background:#f3f3f3"></div>
<svg class="r" style="left:727px;top:496px" width="9" height="5" viewBox="0 0 9 5"><path d="M0.5 0.5h8l-4 4z" fill="#222"/></svg>
<div class="t" style="left:620.3px;top:492.1px;font-size:13.3px;font-weight:400;color:#000;letter-spacing:-0.3px">Tất Cả</div>
<div class="r" style="left:426px;top:511px;width:677px;height:307px;border:1px solid #000;background:#fff"></div>
<div class="r" style="left:427px;top:512px;width:1px;height:305px;background:#8c8c8c"></div>
<div class="r" style="left:427px;top:512px;width:675px;height:1px;background:#c8c8c8"></div>
<div style="position:absolute;left:428px;top:513px;width:657px;height:304px;overflow:hidden"><div style="position:absolute;left:-428px;top:-513px;width:1917px;height:996px">
<div class="r" style="left:467px;top:513px;width:1px;height:32px;background:#d8d8d8"></div>
<div class="r" style="left:467px;top:545px;width:1px;height:272px;background:#a0a0a0"></div>
<div class="r" style="left:523px;top:513px;width:1px;height:32px;background:#d8d8d8"></div>
<div class="r" style="left:523px;top:545px;width:1px;height:272px;background:#a0a0a0"></div>
<div class="r" style="left:598px;top:513px;width:1px;height:32px;background:#d8d8d8"></div>
<div class="r" style="left:598px;top:545px;width:1px;height:272px;background:#a0a0a0"></div>
<div class="r" style="left:690px;top:513px;width:1px;height:32px;background:#d8d8d8"></div>
<div class="r" style="left:690px;top:545px;width:1px;height:272px;background:#a0a0a0"></div>
<div class="r" style="left:790px;top:513px;width:1px;height:32px;background:#d8d8d8"></div>
<div class="r" style="left:790px;top:545px;width:1px;height:272px;background:#a0a0a0"></div>
<div class="r" style="left:891px;top:513px;width:1px;height:32px;background:#d8d8d8"></div>
<div class="r" style="left:891px;top:545px;width:1px;height:272px;background:#a0a0a0"></div>
<div class="r" style="left:984px;top:513px;width:1px;height:32px;background:#d8d8d8"></div>
<div class="r" style="left:984px;top:545px;width:1px;height:272px;background:#a0a0a0"></div>
<div class="r" style="left:467px;top:513px;width:1px;height:32px;background:#e9e9e9"></div>
<div class="t" style="left:475.7px;top:523.9px;font-size:12px;font-weight:700;color:#000;letter-spacing:0.1px">STT</div>
<div class="t" style="left:531.7px;top:523.9px;font-size:12px;font-weight:700;color:#000;letter-spacing:0.1px">Mã Thẻ</div>
<div class="t" style="left:606.6px;top:523.9px;font-size:12px;font-weight:700;color:#000;letter-spacing:0.1px">Mã Thẻ IN</div>
<div class="t" style="left:583.0px;width:300px;text-align:center;top:517.0px;font-size:12px;font-weight:700;color:#000;">Tên Chủ</div>
<div class="t" style="left:583.0px;width:300px;text-align:center;top:529.7px;font-size:12px;font-weight:700;color:#000;">Thẻ</div>
<div class="t" style="left:683.0px;width:300px;text-align:center;top:523.9px;font-size:12px;font-weight:700;color:#000;">Địa Chi</div>
<div class="t" style="left:899.7px;top:523.9px;font-size:12px;font-weight:700;color:#000;letter-spacing:0.1px">Hoạt Động</div>
<div class="t" style="left:876.0px;width:300px;text-align:center;top:517.0px;font-size:12px;font-weight:700;color:#000;">Group</div>
<div class="t" style="left:876.0px;width:300px;text-align:center;top:529.7px;font-size:12px;font-weight:700;color:#000;">Name</div>
<div class="r" style="left:428px;top:545px;width:657px;height:1px;background:#a0a0a0"></div>
<div class="r" style="left:468px;top:546px;width:617px;height:21px;background:#0078d7"></div>
<div class="r" style="left:428px;top:546px;width:39px;height:21px;background:#bcdcf4"></div>
<svg class="r" style="left:433px;top:552px" width="7" height="10" viewBox="0 0 7 10"><path d="M1 0.5v9l5-4.5z" fill="#222"/></svg>
<div class="r" style="left:428px;top:567px;width:657px;height:1px;background:#a0a0a0"></div>
<div class="r" style="left:428px;top:567px;width:39px;height:1px;background:#e5e5e5"></div>
<div class="t" style="left:471px;top:551.3px;font-size:12px;font-weight:400;color:#fff;letter-spacing:-0.5px">1</div>
<div class="t" style="left:527px;top:551.3px;font-size:12px;font-weight:400;color:#fff;letter-spacing:-0.5px">0000786433</div>
<div class="t" style="left:602px;top:551.3px;font-size:12px;font-weight:400;color:#fff;letter-spacing:-0.5px">00001</div>
<div class="t" style="left:694px;top:551.3px;font-size:12px;font-weight:400;color:#fff;letter-spacing:-0.5px">Lê Thị Thúy Ngà</div>
<div class="t" style="left:794px;top:551.3px;font-size:12px;font-weight:400;color:#fff;letter-spacing:-0.5px">NC : HĐQT</div>
<div class="t" style="left:895px;top:551.3px;font-size:12px;font-weight:400;color:#fff;letter-spacing:-0.5px">YES</div>
<div class="t" style="left:988px;top:551.3px;font-size:12px;font-weight:400;color:#fff;letter-spacing:-0.5px">Tech</div>
<div class="r" style="left:428px;top:589px;width:657px;height:1px;background:#a0a0a0"></div>
<div class="r" style="left:428px;top:589px;width:39px;height:1px;background:#e5e5e5"></div>
<div class="t" style="left:471px;top:573.3px;font-size:12px;font-weight:400;color:#000;letter-spacing:-0.5px">2</div>
<div class="t" style="left:527px;top:573.3px;font-size:12px;font-weight:400;color:#000;letter-spacing:-0.5px">0000786434</div>
<div class="t" style="left:602px;top:573.3px;font-size:12px;font-weight:400;color:#000;letter-spacing:-0.5px">00002</div>
<div class="t" style="left:694px;top:573.3px;font-size:12px;font-weight:400;color:#000;letter-spacing:-0.5px">Trần Thị Quế Ngọc</div>
<div class="t" style="left:794px;top:573.3px;font-size:12px;font-weight:400;color:#000;letter-spacing:-0.5px">NC : HĐQT</div>
<div class="t" style="left:895px;top:573.3px;font-size:12px;font-weight:400;color:#000;letter-spacing:-0.5px">YES</div>
<div class="t" style="left:988px;top:573.3px;font-size:12px;font-weight:400;color:#000;letter-spacing:-0.5px">Tech</div>
<div class="r" style="left:428px;top:611px;width:657px;height:1px;background:#a0a0a0"></div>
<div class="r" style="left:428px;top:611px;width:39px;height:1px;background:#e5e5e5"></div>
<div class="t" style="left:471px;top:595.3px;font-size:12px;font-weight:400;color:#000;letter-spacing:-0.5px">3</div>
<div class="t" style="left:527px;top:595.3px;font-size:12px;font-weight:400;color:#000;letter-spacing:-0.5px">0000786435</div>
<div class="t" style="left:602px;top:595.3px;font-size:12px;font-weight:400;color:#000;letter-spacing:-0.5px">00003</div>
<div class="t" style="left:694px;top:595.3px;font-size:12px;font-weight:400;color:#000;letter-spacing:-0.5px">Phạm Văn Thành</div>
<div class="t" style="left:794px;top:595.3px;font-size:12px;font-weight:400;color:#000;letter-spacing:-0.5px">NCP : TNVP</div>
<div class="t" style="left:895px;top:595.3px;font-size:12px;font-weight:400;color:#000;letter-spacing:-0.5px">YES</div>
<div class="t" style="left:988px;top:595.3px;font-size:12px;font-weight:400;color:#000;letter-spacing:-0.5px">Tech</div>
<div class="r" style="left:428px;top:633px;width:657px;height:1px;background:#a0a0a0"></div>
<div class="r" style="left:428px;top:633px;width:39px;height:1px;background:#e5e5e5"></div>
<div class="t" style="left:471px;top:617.3px;font-size:12px;font-weight:400;color:#000;letter-spacing:-0.5px">4</div>
<div class="t" style="left:527px;top:617.3px;font-size:12px;font-weight:400;color:#000;letter-spacing:-0.5px">0000786436</div>
<div class="t" style="left:602px;top:617.3px;font-size:12px;font-weight:400;color:#000;letter-spacing:-0.5px">00004</div>
<div class="t" style="left:694px;top:617.3px;font-size:12px;font-weight:400;color:#000;letter-spacing:-0.5px">Nguyễn Đình Bình</div>
<div class="t" style="left:794px;top:617.3px;font-size:12px;font-weight:400;color:#000;letter-spacing:-0.5px">NCP : TNVP</div>
<div class="t" style="left:895px;top:617.3px;font-size:12px;font-weight:400;color:#000;letter-spacing:-0.5px">YES</div>
<div class="t" style="left:988px;top:617.3px;font-size:12px;font-weight:400;color:#000;letter-spacing:-0.5px">Tech</div>
<div class="r" style="left:428px;top:655px;width:657px;height:1px;background:#a0a0a0"></div>
<div class="r" style="left:428px;top:655px;width:39px;height:1px;background:#e5e5e5"></div>
<div class="t" style="left:471px;top:639.3px;font-size:12px;font-weight:400;color:#000;letter-spacing:-0.5px">5</div>
<div class="t" style="left:527px;top:639.3px;font-size:12px;font-weight:400;color:#000;letter-spacing:-0.5px">0000786437</div>
<div class="t" style="left:602px;top:639.3px;font-size:12px;font-weight:400;color:#000;letter-spacing:-0.5px">00005</div>
<div class="t" style="left:694px;top:639.3px;font-size:12px;font-weight:400;color:#000;letter-spacing:-0.5px">Lê Thị Nga</div>
<div class="t" style="left:794px;top:639.3px;font-size:12px;font-weight:400;color:#000;letter-spacing:-0.5px">NCP : TNVP</div>
<div class="t" style="left:895px;top:639.3px;font-size:12px;font-weight:400;color:#000;letter-spacing:-0.5px">YES</div>
<div class="t" style="left:988px;top:639.3px;font-size:12px;font-weight:400;color:#000;letter-spacing:-0.5px">Tech</div>
<div class="r" style="left:428px;top:677px;width:657px;height:1px;background:#a0a0a0"></div>
<div class="r" style="left:428px;top:677px;width:39px;height:1px;background:#e5e5e5"></div>
<div class="t" style="left:471px;top:661.3px;font-size:12px;font-weight:400;color:#000;letter-spacing:-0.5px">6</div>
<div class="t" style="left:527px;top:661.3px;font-size:12px;font-weight:400;color:#000;letter-spacing:-0.5px">0000786438</div>
<div class="t" style="left:602px;top:661.3px;font-size:12px;font-weight:400;color:#000;letter-spacing:-0.5px">00006</div>
<div class="t" style="left:694px;top:661.3px;font-size:12px;font-weight:400;color:#000;letter-spacing:-0.5px">Lương Quốc Quy...</div>
<div class="t" style="left:794px;top:661.3px;font-size:12px;font-weight:400;color:#000;letter-spacing:-0.5px">NCP : TNVP</div>
<div class="t" style="left:895px;top:661.3px;font-size:12px;font-weight:400;color:#000;letter-spacing:-0.5px">YES</div>
<div class="t" style="left:988px;top:661.3px;font-size:12px;font-weight:400;color:#000;letter-spacing:-0.5px">Tech</div>
<div class="r" style="left:428px;top:699px;width:657px;height:1px;background:#a0a0a0"></div>
<div class="r" style="left:428px;top:699px;width:39px;height:1px;background:#e5e5e5"></div>
<div class="t" style="left:471px;top:683.3px;font-size:12px;font-weight:400;color:#000;letter-spacing:-0.5px">7</div>
<div class="t" style="left:527px;top:683.3px;font-size:12px;font-weight:400;color:#000;letter-spacing:-0.5px">0000786439</div>
<div class="t" style="left:602px;top:683.3px;font-size:12px;font-weight:400;color:#000;letter-spacing:-0.5px">00007</div>
<div class="t" style="left:694px;top:683.3px;font-size:12px;font-weight:400;color:#000;letter-spacing:-0.5px">Nguyễn Văn Thà...</div>
<div class="t" style="left:794px;top:683.3px;font-size:12px;font-weight:400;color:#000;letter-spacing:-0.5px">NCP : TNVP</div>
<div class="t" style="left:895px;top:683.3px;font-size:12px;font-weight:400;color:#000;letter-spacing:-0.5px">YES</div>
<div class="t" style="left:988px;top:683.3px;font-size:12px;font-weight:400;color:#000;letter-spacing:-0.5px">Tech</div>
<div class="r" style="left:428px;top:721px;width:657px;height:1px;background:#a0a0a0"></div>
<div class="r" style="left:428px;top:721px;width:39px;height:1px;background:#e5e5e5"></div>
<div class="t" style="left:471px;top:705.3px;font-size:12px;font-weight:400;color:#000;letter-spacing:-0.5px">8</div>
<div class="t" style="left:527px;top:705.3px;font-size:12px;font-weight:400;color:#000;letter-spacing:-0.5px">0000786440</div>
<div class="t" style="left:602px;top:705.3px;font-size:12px;font-weight:400;color:#000;letter-spacing:-0.5px">00008</div>
<div class="t" style="left:694px;top:705.3px;font-size:12px;font-weight:400;color:#000;letter-spacing:-0.5px">Đặng Bá Thành</div>
<div class="t" style="left:794px;top:705.3px;font-size:12px;font-weight:400;color:#000;letter-spacing:-0.5px">NCP : TNVP</div>
<div class="t" style="left:895px;top:705.3px;font-size:12px;font-weight:400;color:#000;letter-spacing:-0.5px">YES</div>
<div class="t" style="left:988px;top:705.3px;font-size:12px;font-weight:400;color:#000;letter-spacing:-0.5px">Tech</div>
<div class="r" style="left:428px;top:743px;width:657px;height:1px;background:#a0a0a0"></div>
<div class="r" style="left:428px;top:743px;width:39px;height:1px;background:#e5e5e5"></div>
<div class="t" style="left:471px;top:727.3px;font-size:12px;font-weight:400;color:#000;letter-spacing:-0.5px">9</div>
<div class="t" style="left:527px;top:727.3px;font-size:12px;font-weight:400;color:#000;letter-spacing:-0.5px">0000786441</div>
<div class="t" style="left:602px;top:727.3px;font-size:12px;font-weight:400;color:#000;letter-spacing:-0.5px">00009</div>
<div class="t" style="left:694px;top:727.3px;font-size:12px;font-weight:400;color:#000;letter-spacing:-0.5px">Cao Đình Mạnh</div>
<div class="t" style="left:794px;top:727.3px;font-size:12px;font-weight:400;color:#000;letter-spacing:-0.5px">NCP : TNVP</div>
<div class="t" style="left:895px;top:727.3px;font-size:12px;font-weight:400;color:#000;letter-spacing:-0.5px">YES</div>
<div class="t" style="left:988px;top:727.3px;font-size:12px;font-weight:400;color:#000;letter-spacing:-0.5px">Tech</div>
<div class="r" style="left:428px;top:765px;width:657px;height:1px;background:#a0a0a0"></div>
<div class="r" style="left:428px;top:765px;width:39px;height:1px;background:#e5e5e5"></div>
<div class="t" style="left:471px;top:749.3px;font-size:12px;font-weight:400;color:#000;letter-spacing:-0.5px">10</div>
<div class="t" style="left:527px;top:749.3px;font-size:12px;font-weight:400;color:#000;letter-spacing:-0.5px">0000786442</div>
<div class="t" style="left:602px;top:749.3px;font-size:12px;font-weight:400;color:#000;letter-spacing:-0.5px">00010</div>
<div class="t" style="left:694px;top:749.3px;font-size:12px;font-weight:400;color:#000;letter-spacing:-0.5px">Nguyễn Xuân Qu...</div>
<div class="t" style="left:794px;top:749.3px;font-size:12px;font-weight:400;color:#000;letter-spacing:-0.5px">NCP : TNVP</div>
<div class="t" style="left:895px;top:749.3px;font-size:12px;font-weight:400;color:#000;letter-spacing:-0.5px">YES</div>
<div class="t" style="left:988px;top:749.3px;font-size:12px;font-weight:400;color:#000;letter-spacing:-0.5px">Tech</div>
<div class="r" style="left:428px;top:787px;width:657px;height:1px;background:#a0a0a0"></div>
<div class="r" style="left:428px;top:787px;width:39px;height:1px;background:#e5e5e5"></div>
<div class="t" style="left:471px;top:771.3px;font-size:12px;font-weight:400;color:#000;letter-spacing:-0.5px">11</div>
<div class="t" style="left:527px;top:771.3px;font-size:12px;font-weight:400;color:#000;letter-spacing:-0.5px">0000786443</div>
<div class="t" style="left:602px;top:771.3px;font-size:12px;font-weight:400;color:#000;letter-spacing:-0.5px">00011</div>
<div class="t" style="left:694px;top:771.3px;font-size:12px;font-weight:400;color:#000;letter-spacing:-0.5px">Trần Văn Tới</div>
<div class="t" style="left:794px;top:771.3px;font-size:12px;font-weight:400;color:#000;letter-spacing:-0.5px">NCP : TNVP</div>
<div class="t" style="left:895px;top:771.3px;font-size:12px;font-weight:400;color:#000;letter-spacing:-0.5px">YES</div>
<div class="t" style="left:988px;top:771.3px;font-size:12px;font-weight:400;color:#000;letter-spacing:-0.5px">Tech</div>
<div class="r" style="left:428px;top:809px;width:657px;height:1px;background:#a0a0a0"></div>
<div class="r" style="left:428px;top:809px;width:39px;height:1px;background:#e5e5e5"></div>
<div class="t" style="left:471px;top:793.3px;font-size:12px;font-weight:400;color:#000;letter-spacing:-0.5px">12</div>
<div class="t" style="left:527px;top:793.3px;font-size:12px;font-weight:400;color:#000;letter-spacing:-0.5px">0000786444</div>
<div class="t" style="left:602px;top:793.3px;font-size:12px;font-weight:400;color:#000;letter-spacing:-0.5px">00012</div>
<div class="t" style="left:694px;top:793.3px;font-size:12px;font-weight:400;color:#000;letter-spacing:-0.5px">Đặng Thị Xuân</div>
<div class="t" style="left:794px;top:793.3px;font-size:12px;font-weight:400;color:#000;letter-spacing:-0.5px">NCP : TNVP</div>
<div class="t" style="left:895px;top:793.3px;font-size:12px;font-weight:400;color:#000;letter-spacing:-0.5px">YES</div>
<div class="t" style="left:988px;top:793.3px;font-size:12px;font-weight:400;color:#000;letter-spacing:-0.5px">Tech</div>
<div class="r" style="left:428px;top:831px;width:657px;height:1px;background:#a0a0a0"></div>
<div class="r" style="left:428px;top:831px;width:39px;height:1px;background:#e5e5e5"></div>
<div class="t" style="left:471px;top:815.3px;font-size:12px;font-weight:400;color:#000;letter-spacing:-0.5px">13</div>
<div class="t" style="left:527px;top:815.3px;font-size:12px;font-weight:400;color:#000;letter-spacing:-0.5px">0000786445</div>
<div class="t" style="left:602px;top:815.3px;font-size:12px;font-weight:400;color:#000;letter-spacing:-0.5px">00013</div>
<div class="t" style="left:694px;top:815.3px;font-size:12px;font-weight:400;color:#000;letter-spacing:-0.5px">Vũ Thị Hương</div>
<div class="t" style="left:794px;top:815.3px;font-size:12px;font-weight:400;color:#000;letter-spacing:-0.5px">NCP : TNVP</div>
<div class="t" style="left:895px;top:815.3px;font-size:12px;font-weight:400;color:#000;letter-spacing:-0.5px">YES</div>
<div class="t" style="left:988px;top:815.3px;font-size:12px;font-weight:400;color:#000;letter-spacing:-0.5px">Tech</div>
</div></div>
<div class="r" style="left:426px;top:817px;width:677px;height:1px;background:#000"></div>
<div class="r" style="left:1085px;top:512px;width:17px;height:305px;background:#f0f0f0"></div>
<svg class="r" style="left:1089px;top:517px" width="9" height="7" viewBox="0 0 9 7"><path d="M1 6l3.5-3.8 3.5 3.8" stroke="#5a5a5a" stroke-width="2" fill="none"/></svg>
<div class="r" style="left:1086px;top:529px;width:15px;height:17px;background:#cdcdcd"></div>
<svg class="r" style="left:1089px;top:805px" width="9" height="7" viewBox="0 0 9 7"><path d="M1 1l3.5 3.8 3.5-3.8" stroke="#5a5a5a" stroke-width="2" fill="none"/></svg>
<div class="r" style="left:420px;top:824px;width:1074px;height:1px;background:#d7d7d7"></div>
<div class="r" style="left:1489px;top:833px;width:2px;height:2px;background:#999"></div>
<div class="r" style="left:1485px;top:837px;width:2px;height:2px;background:#999"></div>
<div class="r" style="left:1489px;top:837px;width:2px;height:2px;background:#999"></div>
<div class="r" style="left:1481px;top:841px;width:2px;height:2px;background:#999"></div>
<div class="r" style="left:1485px;top:841px;width:2px;height:2px;background:#999"></div>
<div class="r" style="left:1489px;top:841px;width:2px;height:2px;background:#999"></div>
<div class="r" style="left:1112px;top:178px;width:224px;height:643px;border:1px solid #a0a0a0;background:#f0f0f0"></div>
<div class="r" style="left:1113px;top:239px;width:222px;height:1px;background:#a0a0a0"></div>
<div class="r" style="left:1121px;top:190px;width:13px;height:13px;border:1px solid #333;background:#fff"></div>
<div class="t" style="left:1138px;top:190.7px;font-size:12.5px;font-weight:700;color:#000;letter-spacing:0px">Chọn Tất Cả</div>
<div class="r" style="left:1121px;top:218px;width:13px;height:13px;border:1px solid #333;background:#fff"></div>
<svg class="r" style="left:1122px;top:219px" width="11" height="11" viewBox="0 0 11 11"><path d="M1.2 5.6l3 3.2L10 2.2" stroke="#333" stroke-width="1.3" fill="none"/></svg>
<div class="t" style="left:1138px;top:218.8px;font-size:12.5px;font-weight:700;color:#000;letter-spacing:-0.3px">Phân Tầng Nhanh</div>
<div class="r" style="left:1116px;top:243px;width:216px;height:574px;border:1px solid #828790;background:#fff"></div>
<div class="r" style="left:1126px;top:251px;width:9px;height:9px;border:1px solid #919191;background:linear-gradient(#fff,#e6e6e6);border-radius:1px"></div>
<div class="r" style="left:1128px;top:255px;width:5px;height:1px;background:#3355aa"></div>
<div class="r" style="left:1136px;top:255px;width:4px;height:1px;background-image:linear-gradient(to right,#888 50%,transparent 50%);background-size:2px 1px"></div>
<div class="r" style="left:1140px;top:248px;width:13px;height:13px;border:1px solid #333;background:#fff"></div>
<svg class="r" style="left:1141px;top:249px" width="11" height="11" viewBox="0 0 11 11"><path d="M1.2 5.6l3 3.2L10 2.2" stroke="#333" stroke-width="1.3" fill="none"/></svg>
<div class="t" style="left:1155.6px;top:248.0px;font-size:14px;font-weight:700;color:#000;">Nam Cuong Building</div>
<div class="r" style="left:1149px;top:264px;width:1px;height:152px;background-image:linear-gradient(#888 50%,transparent 50%);background-size:1px 2px"></div>
<div class="r" style="left:1150px;top:275px;width:9px;height:1px;background-image:linear-gradient(to right,#888 50%,transparent 50%);background-size:2px 1px"></div>
<div class="r" style="left:1159px;top:268px;width:13px;height:13px;border:1px solid #333;background:#fff"></div>
<svg class="r" style="left:1160px;top:269px" width="11" height="11" viewBox="0 0 11 11"><path d="M1.2 5.6l3 3.2L10 2.2" stroke="#333" stroke-width="1.3" fill="none"/></svg>
<div class="r" style="left:1172px;top:265px;width:62px;height:20px;background:#0000e0"></div>
<div class="t" style="left:1175px;top:267.8px;font-size:14px;font-weight:700;color:#fff;">Thang A</div>
<div class="r" style="left:1150px;top:295px;width:9px;height:1px;background-image:linear-gradient(to right,#888 50%,transparent 50%);background-size:2px 1px"></div>
<div class="r" style="left:1159px;top:288px;width:13px;height:13px;border:1px solid #333;background:#fff"></div>
<svg class="r" style="left:1160px;top:289px" width="11" height="11" viewBox="0 0 11 11"><path d="M1.2 5.6l3 3.2L10 2.2" stroke="#333" stroke-width="1.3" fill="none"/></svg>
<div class="t" style="left:1175px;top:287.8px;font-size:14px;font-weight:700;color:#000;">Thang B</div>
<div class="r" style="left:1150px;top:315px;width:9px;height:1px;background-image:linear-gradient(to right,#888 50%,transparent 50%);background-size:2px 1px"></div>
<div class="r" style="left:1159px;top:308px;width:13px;height:13px;border:1px solid #333;background:#fff"></div>
<svg class="r" style="left:1160px;top:309px" width="11" height="11" viewBox="0 0 11 11"><path d="M1.2 5.6l3 3.2L10 2.2" stroke="#333" stroke-width="1.3" fill="none"/></svg>
<div class="t" style="left:1175px;top:307.8px;font-size:14px;font-weight:700;color:#000;">Thang C</div>
<div class="r" style="left:1150px;top:335px;width:9px;height:1px;background-image:linear-gradient(to right,#888 50%,transparent 50%);background-size:2px 1px"></div>
<div class="r" style="left:1159px;top:328px;width:13px;height:13px;border:1px solid #333;background:#fff"></div>
<svg class="r" style="left:1160px;top:329px" width="11" height="11" viewBox="0 0 11 11"><path d="M1.2 5.6l3 3.2L10 2.2" stroke="#333" stroke-width="1.3" fill="none"/></svg>
<div class="t" style="left:1175px;top:327.8px;font-size:14px;font-weight:700;color:#000;">Thang D</div>
<div class="r" style="left:1150px;top:355px;width:9px;height:1px;background-image:linear-gradient(to right,#888 50%,transparent 50%);background-size:2px 1px"></div>
<div class="r" style="left:1159px;top:348px;width:13px;height:13px;border:1px solid #333;background:#fff"></div>
<svg class="r" style="left:1160px;top:349px" width="11" height="11" viewBox="0 0 11 11"><path d="M1.2 5.6l3 3.2L10 2.2" stroke="#333" stroke-width="1.3" fill="none"/></svg>
<div class="t" style="left:1175px;top:347.8px;font-size:14px;font-weight:700;color:#000;">Thang E</div>
<div class="r" style="left:1150px;top:375px;width:9px;height:1px;background-image:linear-gradient(to right,#888 50%,transparent 50%);background-size:2px 1px"></div>
<div class="r" style="left:1159px;top:368px;width:13px;height:13px;border:1px solid #333;background:#fff"></div>
<svg class="r" style="left:1160px;top:369px" width="11" height="11" viewBox="0 0 11 11"><path d="M1.2 5.6l3 3.2L10 2.2" stroke="#333" stroke-width="1.3" fill="none"/></svg>
<div class="t" style="left:1175px;top:367.8px;font-size:14px;font-weight:700;color:#000;">Thang F</div>
<div class="r" style="left:1150px;top:395px;width:9px;height:1px;background-image:linear-gradient(to right,#888 50%,transparent 50%);background-size:2px 1px"></div>
<div class="r" style="left:1159px;top:388px;width:13px;height:13px;border:1px solid #333;background:#fff"></div>
<svg class="r" style="left:1160px;top:389px" width="11" height="11" viewBox="0 0 11 11"><path d="M1.2 5.6l3 3.2L10 2.2" stroke="#333" stroke-width="1.3" fill="none"/></svg>
<div class="t" style="left:1175px;top:387.8px;font-size:14px;font-weight:700;color:#000;">Thang KT</div>
<div class="r" style="left:1150px;top:415px;width:9px;height:1px;background-image:linear-gradient(to right,#888 50%,transparent 50%);background-size:2px 1px"></div>
<div class="r" style="left:1159px;top:408px;width:13px;height:13px;border:1px solid #333;background:#fff"></div>
<svg class="r" style="left:1160px;top:409px" width="11" height="11" viewBox="0 0 11 11"><path d="M1.2 5.6l3 3.2L10 2.2" stroke="#333" stroke-width="1.3" fill="none"/></svg>
<div class="t" style="left:1175px;top:407.8px;font-size:14px;font-weight:700;color:#000;">Thang G</div>
<div class="r" style="left:1342px;top:178px;width:149px;height:643px;border:1px solid #a0a0a0;background:#f0f0f0"></div>
<div class="r" style="left:1343px;top:239px;width:147px;height:1px;background:#a0a0a0"></div>
<div class="r" style="left:1346px;top:219px;width:13px;height:13px;border:1px solid #333;background:#fff"></div>
<div class="t" style="left:1363px;top:219.8px;font-size:12.5px;font-weight:700;color:#000;letter-spacing:0px">Chọn Tất Cả</div>
<div class="r" style="left:1346px;top:243px;width:141px;height:574px;border:1px solid #828790;background:#fff"></div>
<div class="r" style="left:1348px;top:245px;width:13px;height:13px;border:1px solid #333;background:#fff"></div>
<div class="t" style="left:1366px;top:247.1px;font-size:13.5px;font-weight:700;color:#000;">H</div>
<div class="r" style="left:1418px;top:245px;width:13px;height:13px;border:1px solid #333;background:#fff"></div>
<svg class="r" style="left:1419px;top:246px" width="11" height="11" viewBox="0 0 11 11"><path d="M1.2 5.6l3 3.2L10 2.2" stroke="#333" stroke-width="1.3" fill="none"/></svg>
<div class="t" style="left:1436px;top:247.1px;font-size:13.5px;font-weight:700;color:#ff0000;">32</div>
<div class="r" style="left:1348px;top:262px;width:13px;height:13px;border:1px solid #333;background:#fff"></div>
<div class="t" style="left:1366px;top:264.1px;font-size:13.5px;font-weight:700;color:#000;">1</div>
<div class="r" style="left:1418px;top:262px;width:13px;height:13px;border:1px solid #333;background:#fff"></div>
<svg class="r" style="left:1419px;top:263px" width="11" height="11" viewBox="0 0 11 11"><path d="M1.2 5.6l3 3.2L10 2.2" stroke="#333" stroke-width="1.3" fill="none"/></svg>
<div class="t" style="left:1436px;top:264.1px;font-size:13.5px;font-weight:700;color:#ff0000;">33</div>
<div class="r" style="left:1348px;top:279px;width:13px;height:13px;border:1px solid #333;background:#fff"></div>
<svg class="r" style="left:1349px;top:280px" width="11" height="11" viewBox="0 0 11 11"><path d="M1.2 5.6l3 3.2L10 2.2" stroke="#333" stroke-width="1.3" fill="none"/></svg>
<div class="t" style="left:1366px;top:281.1px;font-size:13.5px;font-weight:700;color:#ff0000;">2</div>
<div class="r" style="left:1418px;top:279px;width:13px;height:13px;border:1px solid #333;background:#fff"></div>
<svg class="r" style="left:1419px;top:280px" width="11" height="11" viewBox="0 0 11 11"><path d="M1.2 5.6l3 3.2L10 2.2" stroke="#333" stroke-width="1.3" fill="none"/></svg>
<div class="t" style="left:1436px;top:281.1px;font-size:13.5px;font-weight:700;color:#ff0000;">34</div>
<div class="r" style="left:1348px;top:296px;width:13px;height:13px;border:1px solid #333;background:#fff"></div>
<svg class="r" style="left:1349px;top:297px" width="11" height="11" viewBox="0 0 11 11"><path d="M1.2 5.6l3 3.2L10 2.2" stroke="#333" stroke-width="1.3" fill="none"/></svg>
<div class="t" style="left:1366px;top:298.1px;font-size:13.5px;font-weight:700;color:#ff0000;">3</div>
<div class="r" style="left:1418px;top:296px;width:13px;height:13px;border:1px solid #333;background:#fff"></div>
<svg class="r" style="left:1419px;top:297px" width="11" height="11" viewBox="0 0 11 11"><path d="M1.2 5.6l3 3.2L10 2.2" stroke="#333" stroke-width="1.3" fill="none"/></svg>
<div class="t" style="left:1436px;top:298.1px;font-size:13.5px;font-weight:700;color:#ff0000;">35</div>
<div class="r" style="left:1348px;top:313px;width:13px;height:13px;border:1px solid #333;background:#fff"></div>
<svg class="r" style="left:1349px;top:314px" width="11" height="11" viewBox="0 0 11 11"><path d="M1.2 5.6l3 3.2L10 2.2" stroke="#333" stroke-width="1.3" fill="none"/></svg>
<div class="t" style="left:1366px;top:315.1px;font-size:13.5px;font-weight:700;color:#ff0000;">4</div>
<div class="r" style="left:1418px;top:313px;width:13px;height:13px;border:1px solid #333;background:#fff"></div>
<svg class="r" style="left:1419px;top:314px" width="11" height="11" viewBox="0 0 11 11"><path d="M1.2 5.6l3 3.2L10 2.2" stroke="#333" stroke-width="1.3" fill="none"/></svg>
<div class="t" style="left:1436px;top:315.1px;font-size:13.5px;font-weight:700;color:#ff0000;">36</div>
<div class="r" style="left:1348px;top:330px;width:13px;height:13px;border:1px solid #333;background:#fff"></div>
<svg class="r" style="left:1349px;top:331px" width="11" height="11" viewBox="0 0 11 11"><path d="M1.2 5.6l3 3.2L10 2.2" stroke="#333" stroke-width="1.3" fill="none"/></svg>
<div class="t" style="left:1366px;top:332.1px;font-size:13.5px;font-weight:700;color:#ff0000;">5</div>
<div class="r" style="left:1418px;top:330px;width:13px;height:13px;border:1px solid #333;background:#fff"></div>
<svg class="r" style="left:1419px;top:331px" width="11" height="11" viewBox="0 0 11 11"><path d="M1.2 5.6l3 3.2L10 2.2" stroke="#333" stroke-width="1.3" fill="none"/></svg>
<div class="t" style="left:1436px;top:332.1px;font-size:13.5px;font-weight:700;color:#ff0000;">37</div>
<div class="r" style="left:1348px;top:347px;width:13px;height:13px;border:1px solid #333;background:#fff"></div>
<svg class="r" style="left:1349px;top:348px" width="11" height="11" viewBox="0 0 11 11"><path d="M1.2 5.6l3 3.2L10 2.2" stroke="#333" stroke-width="1.3" fill="none"/></svg>
<div class="t" style="left:1366px;top:349.1px;font-size:13.5px;font-weight:700;color:#ff0000;">6</div>
<div class="r" style="left:1418px;top:347px;width:13px;height:13px;border:1px solid #333;background:#fff"></div>
<svg class="r" style="left:1419px;top:348px" width="11" height="11" viewBox="0 0 11 11"><path d="M1.2 5.6l3 3.2L10 2.2" stroke="#333" stroke-width="1.3" fill="none"/></svg>
<div class="t" style="left:1436px;top:349.1px;font-size:13.5px;font-weight:700;color:#ff0000;">38</div>
<div class="r" style="left:1348px;top:364px;width:13px;height:13px;border:1px solid #333;background:#fff"></div>
<svg class="r" style="left:1349px;top:365px" width="11" height="11" viewBox="0 0 11 11"><path d="M1.2 5.6l3 3.2L10 2.2" stroke="#333" stroke-width="1.3" fill="none"/></svg>
<div class="t" style="left:1366px;top:366.1px;font-size:13.5px;font-weight:700;color:#ff0000;">7</div>
<div class="r" style="left:1418px;top:364px;width:13px;height:13px;border:1px solid #333;background:#fff"></div>
<svg class="r" style="left:1419px;top:365px" width="11" height="11" viewBox="0 0 11 11"><path d="M1.2 5.6l3 3.2L10 2.2" stroke="#333" stroke-width="1.3" fill="none"/></svg>
<div class="t" style="left:1436px;top:366.1px;font-size:13.5px;font-weight:700;color:#ff0000;">39</div>
<div class="r" style="left:1348px;top:381px;width:13px;height:13px;border:1px solid #333;background:#fff"></div>
<svg class="r" style="left:1349px;top:382px" width="11" height="11" viewBox="0 0 11 11"><path d="M1.2 5.6l3 3.2L10 2.2" stroke="#333" stroke-width="1.3" fill="none"/></svg>
<div class="t" style="left:1366px;top:383.1px;font-size:13.5px;font-weight:700;color:#ff0000;">8</div>
<div class="r" style="left:1418px;top:381px;width:13px;height:13px;border:1px solid #333;background:#fff"></div>
<svg class="r" style="left:1419px;top:382px" width="11" height="11" viewBox="0 0 11 11"><path d="M1.2 5.6l3 3.2L10 2.2" stroke="#333" stroke-width="1.3" fill="none"/></svg>
<div class="t" style="left:1436px;top:383.1px;font-size:13.5px;font-weight:700;color:#ff0000;">40</div>
<div class="r" style="left:1348px;top:398px;width:13px;height:13px;border:1px solid #333;background:#fff"></div>
<svg class="r" style="left:1349px;top:399px" width="11" height="11" viewBox="0 0 11 11"><path d="M1.2 5.6l3 3.2L10 2.2" stroke="#333" stroke-width="1.3" fill="none"/></svg>
<div class="t" style="left:1366px;top:400.1px;font-size:13.5px;font-weight:700;color:#ff0000;">9</div>
<div class="r" style="left:1418px;top:398px;width:13px;height:13px;border:1px solid #333;background:#fff"></div>
<svg class="r" style="left:1419px;top:399px" width="11" height="11" viewBox="0 0 11 11"><path d="M1.2 5.6l3 3.2L10 2.2" stroke="#333" stroke-width="1.3" fill="none"/></svg>
<div class="t" style="left:1436px;top:400.1px;font-size:13.5px;font-weight:700;color:#ff0000;">41</div>
<div class="r" style="left:1348px;top:415px;width:13px;height:13px;border:1px solid #333;background:#fff"></div>
<svg class="r" style="left:1349px;top:416px" width="11" height="11" viewBox="0 0 11 11"><path d="M1.2 5.6l3 3.2L10 2.2" stroke="#333" stroke-width="1.3" fill="none"/></svg>
<div class="t" style="left:1366px;top:417.1px;font-size:13.5px;font-weight:700;color:#ff0000;">10</div>
<div class="r" style="left:1418px;top:415px;width:13px;height:13px;border:1px solid #333;background:#fff"></div>
<svg class="r" style="left:1419px;top:416px" width="11" height="11" viewBox="0 0 11 11"><path d="M1.2 5.6l3 3.2L10 2.2" stroke="#333" stroke-width="1.3" fill="none"/></svg>
<div class="t" style="left:1436px;top:417.1px;font-size:13.5px;font-weight:700;color:#ff0000;">42</div>
<div class="r" style="left:1348px;top:432px;width:13px;height:13px;border:1px solid #333;background:#fff"></div>
<svg class="r" style="left:1349px;top:433px" width="11" height="11" viewBox="0 0 11 11"><path d="M1.2 5.6l3 3.2L10 2.2" stroke="#333" stroke-width="1.3" fill="none"/></svg>
<div class="t" style="left:1366px;top:434.1px;font-size:13.5px;font-weight:700;color:#ff0000;">11</div>
<div class="r" style="left:1418px;top:432px;width:13px;height:13px;border:1px solid #333;background:#fff"></div>
<svg class="r" style="left:1419px;top:433px" width="11" height="11" viewBox="0 0 11 11"><path d="M1.2 5.6l3 3.2L10 2.2" stroke="#333" stroke-width="1.3" fill="none"/></svg>
<div class="t" style="left:1436px;top:434.1px;font-size:13.5px;font-weight:700;color:#ff0000;">43</div>
<div class="r" style="left:1348px;top:449px;width:13px;height:13px;border:1px solid #333;background:#fff"></div>
<svg class="r" style="left:1349px;top:450px" width="11" height="11" viewBox="0 0 11 11"><path d="M1.2 5.6l3 3.2L10 2.2" stroke="#333" stroke-width="1.3" fill="none"/></svg>
<div class="t" style="left:1366px;top:451.1px;font-size:13.5px;font-weight:700;color:#ff0000;">12</div>
<div class="r" style="left:1418px;top:449px;width:13px;height:13px;border:1px solid #333;background:#fff"></div>
<svg class="r" style="left:1419px;top:450px" width="11" height="11" viewBox="0 0 11 11"><path d="M1.2 5.6l3 3.2L10 2.2" stroke="#333" stroke-width="1.3" fill="none"/></svg>
<div class="t" style="left:1436px;top:451.1px;font-size:13.5px;font-weight:700;color:#ff0000;">44</div>
<div class="r" style="left:1348px;top:466px;width:13px;height:13px;border:1px solid #333;background:#fff"></div>
<svg class="r" style="left:1349px;top:467px" width="11" height="11" viewBox="0 0 11 11"><path d="M1.2 5.6l3 3.2L10 2.2" stroke="#333" stroke-width="1.3" fill="none"/></svg>
<div class="t" style="left:1366px;top:468.1px;font-size:13.5px;font-weight:700;color:#ff0000;">13</div>
<div class="r" style="left:1418px;top:466px;width:13px;height:13px;border:1px solid #333;background:#fff"></div>
<svg class="r" style="left:1419px;top:467px" width="11" height="11" viewBox="0 0 11 11"><path d="M1.2 5.6l3 3.2L10 2.2" stroke="#333" stroke-width="1.3" fill="none"/></svg>
<div class="t" style="left:1436px;top:468.1px;font-size:13.5px;font-weight:700;color:#ff0000;">45</div>
<div class="r" style="left:1348px;top:483px;width:13px;height:13px;border:1px solid #333;background:#fff"></div>
<svg class="r" style="left:1349px;top:484px" width="11" height="11" viewBox="0 0 11 11"><path d="M1.2 5.6l3 3.2L10 2.2" stroke="#333" stroke-width="1.3" fill="none"/></svg>
<div class="t" style="left:1366px;top:485.1px;font-size:13.5px;font-weight:700;color:#ff0000;">14</div>
<div class="r" style="left:1418px;top:483px;width:13px;height:13px;border:1px solid #333;background:#fff"></div>
<svg class="r" style="left:1419px;top:484px" width="11" height="11" viewBox="0 0 11 11"><path d="M1.2 5.6l3 3.2L10 2.2" stroke="#333" stroke-width="1.3" fill="none"/></svg>
<div class="t" style="left:1436px;top:485.1px;font-size:13.5px;font-weight:700;color:#ff0000;">46</div>
<div class="r" style="left:1348px;top:500px;width:13px;height:13px;border:1px solid #333;background:#fff"></div>
<svg class="r" style="left:1349px;top:501px" width="11" height="11" viewBox="0 0 11 11"><path d="M1.2 5.6l3 3.2L10 2.2" stroke="#333" stroke-width="1.3" fill="none"/></svg>
<div class="t" style="left:1366px;top:502.1px;font-size:13.5px;font-weight:700;color:#ff0000;">15</div>
<div class="r" style="left:1418px;top:500px;width:13px;height:13px;border:1px solid #333;background:#fff"></div>
<svg class="r" style="left:1419px;top:501px" width="11" height="11" viewBox="0 0 11 11"><path d="M1.2 5.6l3 3.2L10 2.2" stroke="#333" stroke-width="1.3" fill="none"/></svg>
<div class="t" style="left:1436px;top:502.1px;font-size:13.5px;font-weight:700;color:#ff0000;">47</div>
<div class="r" style="left:1348px;top:517px;width:13px;height:13px;border:1px solid #333;background:#fff"></div>
<svg class="r" style="left:1349px;top:518px" width="11" height="11" viewBox="0 0 11 11"><path d="M1.2 5.6l3 3.2L10 2.2" stroke="#333" stroke-width="1.3" fill="none"/></svg>
<div class="t" style="left:1366px;top:519.1px;font-size:13.5px;font-weight:700;color:#ff0000;">16</div>
<div class="r" style="left:1418px;top:517px;width:13px;height:13px;border:1px solid #333;background:#fff"></div>
<svg class="r" style="left:1419px;top:518px" width="11" height="11" viewBox="0 0 11 11"><path d="M1.2 5.6l3 3.2L10 2.2" stroke="#333" stroke-width="1.3" fill="none"/></svg>
<div class="t" style="left:1436px;top:519.1px;font-size:13.5px;font-weight:700;color:#ff0000;">48</div>
<div class="r" style="left:1348px;top:534px;width:13px;height:13px;border:1px solid #333;background:#fff"></div>
<svg class="r" style="left:1349px;top:535px" width="11" height="11" viewBox="0 0 11 11"><path d="M1.2 5.6l3 3.2L10 2.2" stroke="#333" stroke-width="1.3" fill="none"/></svg>
<div class="t" style="left:1366px;top:536.1px;font-size:13.5px;font-weight:700;color:#ff0000;">17</div>
<div class="r" style="left:1418px;top:534px;width:13px;height:13px;border:1px solid #333;background:#fff"></div>
<svg class="r" style="left:1419px;top:535px" width="11" height="11" viewBox="0 0 11 11"><path d="M1.2 5.6l3 3.2L10 2.2" stroke="#333" stroke-width="1.3" fill="none"/></svg>
<div class="t" style="left:1436px;top:536.1px;font-size:13.5px;font-weight:700;color:#ff0000;">49</div>
<div class="r" style="left:1348px;top:551px;width:13px;height:13px;border:1px solid #333;background:#fff"></div>
<svg class="r" style="left:1349px;top:552px" width="11" height="11" viewBox="0 0 11 11"><path d="M1.2 5.6l3 3.2L10 2.2" stroke="#333" stroke-width="1.3" fill="none"/></svg>
<div class="t" style="left:1366px;top:553.1px;font-size:13.5px;font-weight:700;color:#ff0000;">18</div>
<div class="r" style="left:1418px;top:551px;width:13px;height:13px;border:1px solid #333;background:#fff"></div>
<svg class="r" style="left:1419px;top:552px" width="11" height="11" viewBox="0 0 11 11"><path d="M1.2 5.6l3 3.2L10 2.2" stroke="#333" stroke-width="1.3" fill="none"/></svg>
<div class="t" style="left:1436px;top:553.1px;font-size:13.5px;font-weight:700;color:#ff0000;">50</div>
<div class="r" style="left:1348px;top:568px;width:13px;height:13px;border:1px solid #333;background:#fff"></div>
<svg class="r" style="left:1349px;top:569px" width="11" height="11" viewBox="0 0 11 11"><path d="M1.2 5.6l3 3.2L10 2.2" stroke="#333" stroke-width="1.3" fill="none"/></svg>
<div class="t" style="left:1366px;top:570.1px;font-size:13.5px;font-weight:700;color:#ff0000;">19</div>
<div class="r" style="left:1418px;top:568px;width:13px;height:13px;border:1px solid #333;background:#fff"></div>
<svg class="r" style="left:1419px;top:569px" width="11" height="11" viewBox="0 0 11 11"><path d="M1.2 5.6l3 3.2L10 2.2" stroke="#333" stroke-width="1.3" fill="none"/></svg>
<div class="t" style="left:1436px;top:570.1px;font-size:13.5px;font-weight:700;color:#ff0000;">51</div>
<div class="r" style="left:1348px;top:585px;width:13px;height:13px;border:1px solid #333;background:#fff"></div>
<svg class="r" style="left:1349px;top:586px" width="11" height="11" viewBox="0 0 11 11"><path d="M1.2 5.6l3 3.2L10 2.2" stroke="#333" stroke-width="1.3" fill="none"/></svg>
<div class="t" style="left:1366px;top:587.1px;font-size:13.5px;font-weight:700;color:#ff0000;">20</div>
<div class="r" style="left:1418px;top:585px;width:13px;height:13px;border:1px solid #333;background:#fff"></div>
<svg class="r" style="left:1419px;top:586px" width="11" height="11" viewBox="0 0 11 11"><path d="M1.2 5.6l3 3.2L10 2.2" stroke="#333" stroke-width="1.3" fill="none"/></svg>
<div class="t" style="left:1436px;top:587.1px;font-size:13.5px;font-weight:700;color:#ff0000;">52</div>
<div class="r" style="left:1348px;top:602px;width:13px;height:13px;border:1px solid #333;background:#fff"></div>
<svg class="r" style="left:1349px;top:603px" width="11" height="11" viewBox="0 0 11 11"><path d="M1.2 5.6l3 3.2L10 2.2" stroke="#333" stroke-width="1.3" fill="none"/></svg>
<div class="t" style="left:1366px;top:604.1px;font-size:13.5px;font-weight:700;color:#ff0000;">21</div>
<div class="r" style="left:1418px;top:602px;width:13px;height:13px;border:1px solid #333;background:#fff"></div>
<svg class="r" style="left:1419px;top:603px" width="11" height="11" viewBox="0 0 11 11"><path d="M1.2 5.6l3 3.2L10 2.2" stroke="#333" stroke-width="1.3" fill="none"/></svg>
<div class="t" style="left:1436px;top:604.1px;font-size:13.5px;font-weight:700;color:#ff0000;">53</div>
<div class="r" style="left:1348px;top:619px;width:13px;height:13px;border:1px solid #333;background:#fff"></div>
<svg class="r" style="left:1349px;top:620px" width="11" height="11" viewBox="0 0 11 11"><path d="M1.2 5.6l3 3.2L10 2.2" stroke="#333" stroke-width="1.3" fill="none"/></svg>
<div class="t" style="left:1366px;top:621.1px;font-size:13.5px;font-weight:700;color:#ff0000;">22</div>
<div class="r" style="left:1418px;top:619px;width:13px;height:13px;border:1px solid #333;background:#fff"></div>
<svg class="r" style="left:1419px;top:620px" width="11" height="11" viewBox="0 0 11 11"><path d="M1.2 5.6l3 3.2L10 2.2" stroke="#333" stroke-width="1.3" fill="none"/></svg>
<div class="t" style="left:1436px;top:621.1px;font-size:13.5px;font-weight:700;color:#ff0000;">54</div>
<div class="r" style="left:1348px;top:636px;width:13px;height:13px;border:1px solid #333;background:#fff"></div>
<svg class="r" style="left:1349px;top:637px" width="11" height="11" viewBox="0 0 11 11"><path d="M1.2 5.6l3 3.2L10 2.2" stroke="#333" stroke-width="1.3" fill="none"/></svg>
<div class="t" style="left:1366px;top:638.1px;font-size:13.5px;font-weight:700;color:#ff0000;">23</div>
<div class="r" style="left:1418px;top:636px;width:13px;height:13px;border:1px solid #333;background:#fff"></div>
<svg class="r" style="left:1419px;top:637px" width="11" height="11" viewBox="0 0 11 11"><path d="M1.2 5.6l3 3.2L10 2.2" stroke="#333" stroke-width="1.3" fill="none"/></svg>
<div class="t" style="left:1436px;top:638.1px;font-size:13.5px;font-weight:700;color:#ff0000;">55</div>
<div class="r" style="left:1348px;top:653px;width:13px;height:13px;border:1px solid #333;background:#fff"></div>
<svg class="r" style="left:1349px;top:654px" width="11" height="11" viewBox="0 0 11 11"><path d="M1.2 5.6l3 3.2L10 2.2" stroke="#333" stroke-width="1.3" fill="none"/></svg>
<div class="t" style="left:1366px;top:655.1px;font-size:13.5px;font-weight:700;color:#ff0000;">24</div>
<div class="r" style="left:1418px;top:653px;width:13px;height:13px;border:1px solid #333;background:#fff"></div>
<svg class="r" style="left:1419px;top:654px" width="11" height="11" viewBox="0 0 11 11"><path d="M1.2 5.6l3 3.2L10 2.2" stroke="#333" stroke-width="1.3" fill="none"/></svg>
<div class="t" style="left:1436px;top:655.1px;font-size:13.5px;font-weight:700;color:#ff0000;">56</div>
<div class="r" style="left:1348px;top:670px;width:13px;height:13px;border:1px solid #333;background:#fff"></div>
<svg class="r" style="left:1349px;top:671px" width="11" height="11" viewBox="0 0 11 11"><path d="M1.2 5.6l3 3.2L10 2.2" stroke="#333" stroke-width="1.3" fill="none"/></svg>
<div class="t" style="left:1366px;top:672.1px;font-size:13.5px;font-weight:700;color:#ff0000;">25</div>
<div class="r" style="left:1418px;top:670px;width:13px;height:13px;border:1px solid #333;background:#fff"></div>
<svg class="r" style="left:1419px;top:671px" width="11" height="11" viewBox="0 0 11 11"><path d="M1.2 5.6l3 3.2L10 2.2" stroke="#333" stroke-width="1.3" fill="none"/></svg>
<div class="t" style="left:1436px;top:672.1px;font-size:13.5px;font-weight:700;color:#ff0000;">57</div>
<div class="r" style="left:1348px;top:687px;width:13px;height:13px;border:1px solid #333;background:#fff"></div>
<svg class="r" style="left:1349px;top:688px" width="11" height="11" viewBox="0 0 11 11"><path d="M1.2 5.6l3 3.2L10 2.2" stroke="#333" stroke-width="1.3" fill="none"/></svg>
<div class="t" style="left:1366px;top:689.1px;font-size:13.5px;font-weight:700;color:#ff0000;">26</div>
<div class="r" style="left:1418px;top:687px;width:13px;height:13px;border:1px solid #333;background:#fff"></div>
<svg class="r" style="left:1419px;top:688px" width="11" height="11" viewBox="0 0 11 11"><path d="M1.2 5.6l3 3.2L10 2.2" stroke="#333" stroke-width="1.3" fill="none"/></svg>
<div class="t" style="left:1436px;top:689.1px;font-size:13.5px;font-weight:700;color:#ff0000;">58</div>
<div class="r" style="left:1348px;top:704px;width:13px;height:13px;border:1px solid #333;background:#fff"></div>
<svg class="r" style="left:1349px;top:705px" width="11" height="11" viewBox="0 0 11 11"><path d="M1.2 5.6l3 3.2L10 2.2" stroke="#333" stroke-width="1.3" fill="none"/></svg>
<div class="t" style="left:1366px;top:706.1px;font-size:13.5px;font-weight:700;color:#ff0000;">27</div>
<div class="r" style="left:1418px;top:704px;width:13px;height:13px;border:1px solid #333;background:#fff"></div>
<svg class="r" style="left:1419px;top:705px" width="11" height="11" viewBox="0 0 11 11"><path d="M1.2 5.6l3 3.2L10 2.2" stroke="#333" stroke-width="1.3" fill="none"/></svg>
<div class="t" style="left:1436px;top:706.1px;font-size:13.5px;font-weight:700;color:#ff0000;">59</div>
<div class="r" style="left:1348px;top:721px;width:13px;height:13px;border:1px solid #333;background:#fff"></div>
<svg class="r" style="left:1349px;top:722px" width="11" height="11" viewBox="0 0 11 11"><path d="M1.2 5.6l3 3.2L10 2.2" stroke="#333" stroke-width="1.3" fill="none"/></svg>
<div class="t" style="left:1366px;top:723.1px;font-size:13.5px;font-weight:700;color:#ff0000;">28</div>
<div class="r" style="left:1418px;top:721px;width:13px;height:13px;border:1px solid #333;background:#fff"></div>
<svg class="r" style="left:1419px;top:722px" width="11" height="11" viewBox="0 0 11 11"><path d="M1.2 5.6l3 3.2L10 2.2" stroke="#333" stroke-width="1.3" fill="none"/></svg>
<div class="t" style="left:1436px;top:723.1px;font-size:13.5px;font-weight:700;color:#ff0000;">60</div>
<div class="r" style="left:1348px;top:738px;width:13px;height:13px;border:1px solid #333;background:#fff"></div>
<svg class="r" style="left:1349px;top:739px" width="11" height="11" viewBox="0 0 11 11"><path d="M1.2 5.6l3 3.2L10 2.2" stroke="#333" stroke-width="1.3" fill="none"/></svg>
<div class="t" style="left:1366px;top:740.1px;font-size:13.5px;font-weight:700;color:#ff0000;">29</div>
<div class="r" style="left:1418px;top:738px;width:13px;height:13px;border:1px solid #333;background:#fff"></div>
<svg class="r" style="left:1419px;top:739px" width="11" height="11" viewBox="0 0 11 11"><path d="M1.2 5.6l3 3.2L10 2.2" stroke="#333" stroke-width="1.3" fill="none"/></svg>
<div class="t" style="left:1436px;top:740.1px;font-size:13.5px;font-weight:700;color:#ff0000;">61</div>
<div class="r" style="left:1348px;top:755px;width:13px;height:13px;border:1px solid #333;background:#fff"></div>
<svg class="r" style="left:1349px;top:756px" width="11" height="11" viewBox="0 0 11 11"><path d="M1.2 5.6l3 3.2L10 2.2" stroke="#333" stroke-width="1.3" fill="none"/></svg>
<div class="t" style="left:1366px;top:757.1px;font-size:13.5px;font-weight:700;color:#ff0000;">30</div>
<div class="r" style="left:1418px;top:755px;width:13px;height:13px;border:1px solid #333;background:#fff"></div>
<svg class="r" style="left:1419px;top:756px" width="11" height="11" viewBox="0 0 11 11"><path d="M1.2 5.6l3 3.2L10 2.2" stroke="#333" stroke-width="1.3" fill="none"/></svg>
<div class="t" style="left:1436px;top:757.1px;font-size:13.5px;font-weight:700;color:#ff0000;">62</div>
<div class="r" style="left:1348px;top:772px;width:13px;height:13px;border:1px solid #333;background:#fff"></div>
<svg class="r" style="left:1349px;top:773px" width="11" height="11" viewBox="0 0 11 11"><path d="M1.2 5.6l3 3.2L10 2.2" stroke="#333" stroke-width="1.3" fill="none"/></svg>
<div class="t" style="left:1366px;top:774.1px;font-size:13.5px;font-weight:700;color:#ff0000;">31</div>
<div class="r" style="left:1418px;top:772px;width:13px;height:13px;border:1px solid #333;background:#fff"></div>
<div class="t" style="left:1436px;top:774.1px;font-size:13.5px;font-weight:700;color:#000;">63</div>
<div class="r" style="left:1364px;top:245px;width:14px;height:17px;border:1px dotted #222"></div>
</body></html>
